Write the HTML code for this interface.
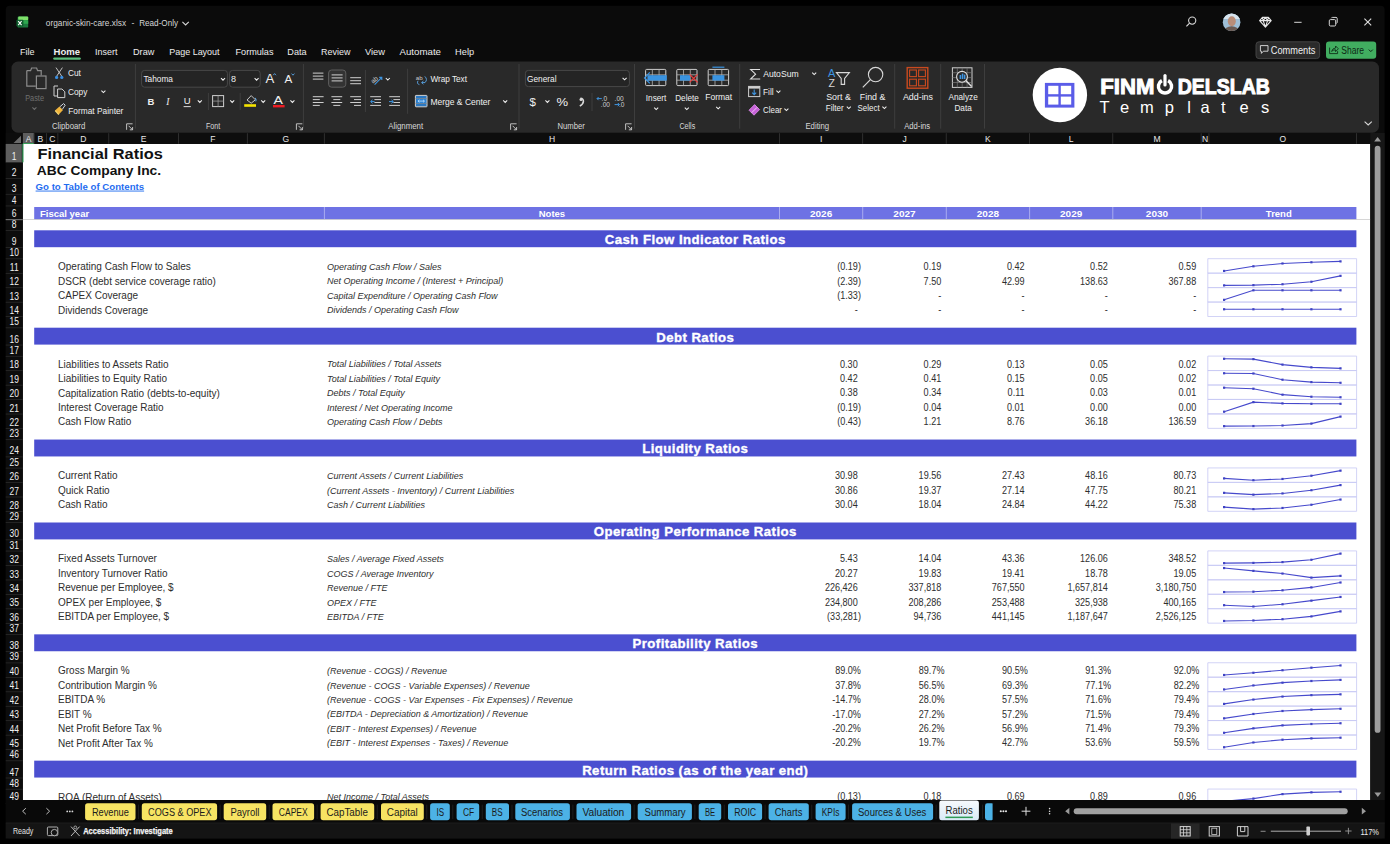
<!DOCTYPE html><html><head><meta charset="utf-8"><style>
html,body{margin:0;padding:0;background:#000;width:1390px;height:844px;overflow:hidden}
svg{display:block;font-family:"Liberation Sans",sans-serif}
</style></head><body>
<svg width="1390" height="844" viewBox="0 0 1390 844">
<rect x="0.00" y="0.00" width="1390.00" height="844.00" fill="#000"/>
<rect x="5.8" y="5.8" width="1378.8" height="832.7" rx="4" fill="#0b0b0b"/>
<rect x="17.6" y="16.6" width="10.6" height="11" rx="1.2" fill="#1d7a3f"/>
<rect x="18.2" y="16.6" width="10" height="3.6" rx="1" fill="#7fe06a"/>
<rect x="21" y="20.4" width="7.2" height="3.4" fill="#2ea84f"/>
<rect x="16.4" y="19.8" width="7" height="6.6" rx="0.8" fill="#0f5e2e"/>
<path d="M18.2 21.2 L21.6 25.2 M21.6 21.2 L18.2 25.2" stroke="#fff" stroke-width="1.1"/>
<text x="45.80" y="25.80" font-size="8.6" fill="#d6d6d6" textLength="80.30" lengthAdjust="spacingAndGlyphs">organic-skin-care.xlsx</text>
<text x="131.40" y="25.80" font-size="8.6" fill="#d6d6d6">-</text>
<text x="139.20" y="25.80" font-size="8.6" fill="#d6d6d6" textLength="38.90" lengthAdjust="spacingAndGlyphs">Read-Only</text>
<path d="M182.4 21.8 L185.6 25 L188.8 21.8" fill="none" stroke="#d6d6d6" stroke-width="1.1"/>
<circle cx="1192.2" cy="20.6" r="3.6" fill="none" stroke="#d8d8d8" stroke-width="1.1"/>
<path d="M1189.6 23.2 L1186.4 26.4" stroke="#d8d8d8" stroke-width="1.2"/>
<defs><clipPath id="avc"><circle cx="1231.6" cy="22.2" r="8.8"/></clipPath></defs>
<g clip-path="url(#avc)"><rect x="1222" y="12" width="20" height="20" fill="#9fbfd6"/><rect x="1222" y="12" width="20" height="7" fill="#d6e4ee"/>
<ellipse cx="1231.8" cy="21.2" rx="4.0" ry="5.0" fill="#b98d78"/><path d="M1223.6 31.6 Q1224.6 26.6 1231.6 26.2 Q1238.6 26.6 1239.6 31.6 Z" fill="#6b5a52"/></g>
<path d="M1259.6 20.6 L1262.4 17.4 L1268.4 17.4 L1271.2 20.6 L1265.4 27.2 Z M1259.6 20.6 L1271.2 20.6 M1263.2 20.6 L1265.4 27.2 L1267.6 20.6 M1262.4 17.4 L1263.2 20.6 L1265.4 17.4 L1267.6 20.6 L1268.4 17.4" fill="none" stroke="#e6e6e6" stroke-width="1.1" stroke-linejoin="round"/>
<rect x="1294.20" y="21.80" width="7.40" height="1.00" fill="#d8d8d8"/>
<rect x="1329.3" y="19.6" width="6.4" height="6.4" rx="1.2" fill="none" stroke="#d8d8d8" stroke-width="1"/>
<path d="M1331.2 18.2 Q1331.6 17.4 1332.6 17.4 L1336 17.4 Q1337.2 17.4 1337.2 18.6 L1337.2 22.2 Q1337.2 23.2 1336.4 23.4" fill="none" stroke="#d8d8d8" stroke-width="1"/>
<path d="M1364.4 18.6 L1371.2 25.4 M1371.2 18.6 L1364.4 25.4" stroke="#e0e0e0" stroke-width="1.1"/>
<text x="20.00" y="54.80" font-size="9.8" fill="#ededed" textLength="14.50" lengthAdjust="spacingAndGlyphs">File</text>
<text x="53.50" y="54.80" font-size="9.8" fill="#ededed" font-weight="bold" textLength="26.60" lengthAdjust="spacingAndGlyphs">Home</text>
<text x="95.00" y="54.80" font-size="9.8" fill="#ededed" textLength="22.40" lengthAdjust="spacingAndGlyphs">Insert</text>
<text x="133.00" y="54.80" font-size="9.8" fill="#ededed" textLength="21.30" lengthAdjust="spacingAndGlyphs">Draw</text>
<text x="169.20" y="54.80" font-size="9.8" fill="#ededed" textLength="50.40" lengthAdjust="spacingAndGlyphs">Page Layout</text>
<text x="235.50" y="54.80" font-size="9.8" fill="#ededed" textLength="38.00" lengthAdjust="spacingAndGlyphs">Formulas</text>
<text x="287.30" y="54.80" font-size="9.8" fill="#ededed" textLength="19.30" lengthAdjust="spacingAndGlyphs">Data</text>
<text x="321.10" y="54.80" font-size="9.8" fill="#ededed" textLength="29.40" lengthAdjust="spacingAndGlyphs">Review</text>
<text x="365.00" y="54.80" font-size="9.8" fill="#ededed" textLength="20.00" lengthAdjust="spacingAndGlyphs">View</text>
<text x="399.50" y="54.80" font-size="9.8" fill="#ededed" textLength="41.50" lengthAdjust="spacingAndGlyphs">Automate</text>
<text x="455.10" y="54.80" font-size="9.8" fill="#ededed" textLength="19.00" lengthAdjust="spacingAndGlyphs">Help</text>
<rect x="53.2" y="57.4" width="27.6" height="2.4" rx="1.2" fill="#5bbd7b"/>
<rect x="1256.0" y="41.8" width="63.6" height="16.8" rx="3" fill="#2a2a2a" stroke="#474747" stroke-width="0.9"/>
<path d="M1260.4 45.6 L1268 45.6 L1268 51.2 L1263.4 51.2 L1261.4 53.4 L1261.4 51.2 L1260.4 51.2 Z" fill="none" stroke="#e0e0e0" stroke-width="0.9"/>
<text x="1270.80" y="54.40" font-size="10" fill="#f0f0f0" textLength="44.60" lengthAdjust="spacingAndGlyphs">Comments</text>
<rect x="1326.0" y="41.6" width="50.2" height="17.2" rx="3" fill="#41ad60"/>
<path d="M1329.6 47.6 L1329.6 53.6 L1337.6 53.6 L1337.6 51.2 M1331.6 51.4 Q1332.4 48.2 1335.6 48 L1335.6 46 L1338.4 48.8 L1335.6 51.6 L1335.6 49.8 Q1333.2 49.8 1331.6 51.4 Z" fill="none" stroke="#10301a" stroke-width="0.9" stroke-linejoin="round"/>
<text x="1341.30" y="54.40" font-size="10" fill="#0e2a16" textLength="22.70" lengthAdjust="spacingAndGlyphs">Share</text>
<path d="M1368.8 49.6 L1370.8 51.6 L1372.8 49.6" fill="none" stroke="#0e2a16" stroke-width="1"/>
<rect x="11.5" y="61.5" width="1367.5" height="71.2" rx="6.5" fill="#292929"/>
<path d="M26.8 70.6 L30.6 70.6 L31.6 68 L36.6 68 L37.6 70.6 L41.2 70.6 L41.2 75.4 M26.8 70.6 L26.8 86.2 L35.8 86.2" fill="none" stroke="#8c8c8c" stroke-width="1.2"/>
<rect x="36.4" y="76.0" width="9.6" height="12.6" fill="none" stroke="#8c8c8c" stroke-width="1.2"/>
<text x="25.20" y="100.50" font-size="9" fill="#6f6f6f" textLength="18.80" lengthAdjust="spacingAndGlyphs">Paste</text>
<path d="M32.40 107.40 L34.40 109.40 L36.40 107.40" fill="none" stroke="#6f6f6f" stroke-width="1.05"/>
<path d="M56 67.6 L61.6 76 M62.4 67.6 L56.8 76" fill="none" stroke="#d0d0d0" stroke-width="0.9"/>
<circle cx="56.6" cy="77.4" r="1.6" fill="#3b8ee0"/><circle cx="61.8" cy="77.4" r="1.6" fill="#3b8ee0"/>
<text x="68.00" y="76.40" font-size="9" fill="#f0f0f0" textLength="12.90" lengthAdjust="spacingAndGlyphs">Cut</text>
<path d="M58 86 L54 86 L54 96 L57.6 96" fill="none" stroke="#cfcfcf" stroke-width="1"/>
<path d="M57.6 89 L62 89 L64.8 91.8 L64.8 97.6 L57.6 97.6 Z" fill="none" stroke="#cfcfcf" stroke-width="1"/>
<text x="68.00" y="94.80" font-size="9" fill="#f0f0f0" textLength="19.40" lengthAdjust="spacingAndGlyphs">Copy</text>
<path d="M101.40 90.60 L103.40 92.60 L105.40 90.60" fill="none" stroke="#f0f0f0" stroke-width="1.05"/>
<path d="M55 110.6 L59.4 106.4 L63 110 L58.8 114.6 Z" fill="#f0b43c"/>
<path d="M55.2 110.6 L58.8 114.6" stroke="#f7d873" stroke-width="1.2"/>
<path d="M59.8 106.8 L63.6 103.6 L65.2 105.2 L62.4 109.2" fill="none" stroke="#cfd6e0" stroke-width="1"/>
<text x="68.20" y="113.80" font-size="9" fill="#f0f0f0" textLength="55.20" lengthAdjust="spacingAndGlyphs">Format Painter</text>
<text x="52.00" y="128.80" font-size="8.4" fill="#d8d8d8" textLength="33.20" lengthAdjust="spacingAndGlyphs">Clipboard</text>
<path d="M126.60 129.80 L126.60 123.80 L132.60 123.80" fill="none" stroke="#cfcfcf" stroke-width="0.9"/>
<path d="M128.60 125.80 L132.60 129.80 M132.60 127.00 L132.60 129.80 L129.80 129.80" fill="none" stroke="#cfcfcf" stroke-width="0.9"/>
<rect x="134.90" y="64.00" width="1.00" height="64.60" fill="#3e3e3e"/>
<rect x="141.6" y="70.4" width="85.8" height="16.8" rx="3" fill="#242424" stroke="#4c4c4c" stroke-width="0.9"/>
<text x="143.40" y="82.40" font-size="9" fill="#f0f0f0" textLength="29.60" lengthAdjust="spacingAndGlyphs">Tahoma</text>
<path d="M221.00 78.20 L223.00 80.20 L225.00 78.20" fill="none" stroke="#f0f0f0" stroke-width="1.05"/>
<rect x="229.6" y="70.4" width="30.6" height="16.8" rx="3" fill="#242424" stroke="#4c4c4c" stroke-width="0.9"/>
<text x="231.00" y="82.40" font-size="9" fill="#f0f0f0">8</text>
<path d="M254.60 78.20 L256.60 80.20 L258.60 78.20" fill="none" stroke="#f0f0f0" stroke-width="1.05"/>
<text x="265.40" y="83.40" font-size="12" fill="#f0f0f0" textLength="8.80" lengthAdjust="spacingAndGlyphs">A</text>
<path d="M273.2 75.2 L274.6 73.6 L276 75.2" fill="none" stroke="#5aa6e8" stroke-width="0.9"/>
<text x="284.40" y="83.40" font-size="11" fill="#f0f0f0" textLength="7.80" lengthAdjust="spacingAndGlyphs">A</text>
<path d="M291.6 73.6 L293 75.2 L294.4 73.6" fill="none" stroke="#5aa6e8" stroke-width="0.9"/>
<text x="147.40" y="104.80" font-size="9.5" fill="#f0f0f0" font-weight="bold">B</text>
<text x="166.20" y="104.80" font-size="9.5" fill="#f0f0f0" font-style="italic" font-family="Liberation Serif">I</text>
<text x="183.80" y="104.20" font-size="9.5" fill="#f0f0f0">U</text>
<rect x="183.60" y="106.20" width="7.20" height="0.90" fill="#f0f0f0"/>
<path d="M197.80 100.40 L199.80 102.40 L201.80 100.40" fill="none" stroke="#f0f0f0" stroke-width="1.05"/>
<rect x="207.90" y="93.00" width="1.00" height="17.00" fill="#3e3e3e"/>
<rect x="212.6" y="95.6" width="11" height="11" fill="none" stroke="#cfcfcf" stroke-width="1"/>
<path d="M218.1 95.6 L218.1 106.6 M212.6 101.1 L223.6 101.1" stroke="#9a9a9a" stroke-width="0.8"/>
<path d="M230.20 100.40 L232.20 102.40 L234.20 100.40" fill="none" stroke="#f0f0f0" stroke-width="1.05"/>
<rect x="239.70" y="93.00" width="1.00" height="17.00" fill="#3e3e3e"/>
<path d="M247 100 L251.2 95.6 L255.4 99.8 L251.2 103.2 Z" fill="none" stroke="#d8d8d8" stroke-width="0.9"/>
<path d="M255.2 97.8 Q256.8 99.8 255.8 101.4" fill="none" stroke="#5aa6e8" stroke-width="1"/>
<rect x="244.20" y="104.20" width="11.80" height="2.60" fill="#f6e400"/>
<path d="M261.20 100.40 L263.20 102.40 L265.20 100.40" fill="none" stroke="#f0f0f0" stroke-width="1.05"/>
<text x="273.60" y="103.60" font-size="11" fill="#f0f0f0" textLength="9.40" lengthAdjust="spacingAndGlyphs">A</text>
<rect x="273.00" y="105.00" width="11.60" height="2.40" fill="#ec1c24"/>
<path d="M290.40 100.40 L292.40 102.40 L294.40 100.40" fill="none" stroke="#f0f0f0" stroke-width="1.05"/>
<text x="206.00" y="128.80" font-size="8.4" fill="#d8d8d8" textLength="14.20" lengthAdjust="spacingAndGlyphs">Font</text>
<path d="M296.40 129.80 L296.40 123.80 L302.40 123.80" fill="none" stroke="#cfcfcf" stroke-width="0.9"/>
<path d="M298.40 125.80 L302.40 129.80 M302.40 127.00 L302.40 129.80 L299.60 129.80" fill="none" stroke="#cfcfcf" stroke-width="0.9"/>
<rect x="302.90" y="64.00" width="1.00" height="64.60" fill="#3e3e3e"/>
<rect x="312.80" y="72.60" width="10.60" height="1.00" fill="#cfcfcf"/>
<rect x="312.80" y="75.60" width="10.60" height="1.00" fill="#cfcfcf"/>
<rect x="312.80" y="78.60" width="10.60" height="1.00" fill="#cfcfcf"/>
<rect x="328.6" y="70.0" width="17.2" height="17.2" rx="3" fill="#333" stroke="#5e5e5e" stroke-width="1"/>
<rect x="331.60" y="74.40" width="11.00" height="1.00" fill="#cfcfcf"/>
<rect x="331.60" y="77.40" width="11.00" height="1.00" fill="#cfcfcf"/>
<rect x="331.60" y="80.40" width="11.00" height="1.00" fill="#cfcfcf"/>
<rect x="350.20" y="77.20" width="10.80" height="1.00" fill="#cfcfcf"/>
<rect x="350.20" y="80.20" width="10.80" height="1.00" fill="#cfcfcf"/>
<rect x="350.20" y="83.20" width="10.80" height="1.00" fill="#cfcfcf"/>
<rect x="364.90" y="70.00" width="1.00" height="40.00" fill="#3e3e3e"/>
<text x="370.2" y="82" font-size="6.5" fill="#cfcfcf" transform="rotate(-40 374 79)">ab</text>
<path d="M374.6 84.6 L381.8 77.4 M379.2 77.4 L381.8 77.4 L381.8 80" fill="none" stroke="#3f95e0" stroke-width="1.1"/>
<path d="M385.80 78.00 L387.80 80.00 L389.80 78.00" fill="none" stroke="#f0f0f0" stroke-width="1.05"/>
<rect x="407.10" y="68.70" width="1.00" height="45.10" fill="#3e3e3e"/>
<text x="415.8" y="80" font-size="6.2" fill="#cfcfcf">ab</text>
<path d="M418 80.8 Q416.4 83.8 419.4 84.6 M424.8 76.4 Q428 79.4 425 82.6 L421.8 82.6 M423.4 81 L421.6 82.6 L423.4 84.2" fill="none" stroke="#5aa6e8" stroke-width="0.9"/>
<text x="430.40" y="81.60" font-size="9" fill="#f0f0f0" textLength="36.60" lengthAdjust="spacingAndGlyphs">Wrap Text</text>
<rect x="312.80" y="96.20" width="10.80" height="1.00" fill="#cfcfcf"/>
<rect x="312.80" y="99.10" width="7.00" height="1.00" fill="#cfcfcf"/>
<rect x="312.80" y="102.00" width="10.80" height="1.00" fill="#cfcfcf"/>
<rect x="312.80" y="104.90" width="7.00" height="1.00" fill="#cfcfcf"/>
<rect x="331.40" y="96.20" width="10.80" height="1.00" fill="#cfcfcf"/>
<rect x="333.30" y="99.10" width="7.00" height="1.00" fill="#cfcfcf"/>
<rect x="331.40" y="102.00" width="10.80" height="1.00" fill="#cfcfcf"/>
<rect x="333.30" y="104.90" width="7.00" height="1.00" fill="#cfcfcf"/>
<rect x="350.20" y="96.20" width="10.80" height="1.00" fill="#cfcfcf"/>
<rect x="354.00" y="99.10" width="7.00" height="1.00" fill="#cfcfcf"/>
<rect x="350.20" y="102.00" width="10.80" height="1.00" fill="#cfcfcf"/>
<rect x="354.00" y="104.90" width="7.00" height="1.00" fill="#cfcfcf"/>
<rect x="364.90" y="92.00" width="1.00" height="20.00" fill="#3e3e3e"/>
<rect x="370.20" y="96.20" width="10.80" height="1.00" fill="#cfcfcf"/>
<rect x="374.40" y="99.10" width="6.60" height="1.00" fill="#cfcfcf"/>
<rect x="374.40" y="102.00" width="6.60" height="1.00" fill="#cfcfcf"/>
<rect x="370.20" y="104.90" width="10.80" height="1.00" fill="#cfcfcf"/>
<path d="M374.6 101.6 L371 101.6 M372.6 99.8 L370.6 101.6 L372.6 103.4" fill="none" stroke="#3f95e0" stroke-width="1"/>
<rect x="389.20" y="96.20" width="10.80" height="1.00" fill="#cfcfcf"/>
<rect x="393.40" y="99.10" width="6.60" height="1.00" fill="#cfcfcf"/>
<rect x="393.40" y="102.00" width="6.60" height="1.00" fill="#cfcfcf"/>
<rect x="389.20" y="104.90" width="10.80" height="1.00" fill="#cfcfcf"/>
<path d="M389 101.6 L393 101.6 M391.4 99.8 L393.4 101.6 L391.4 103.4" fill="none" stroke="#3f95e0" stroke-width="1"/>
<rect x="415.4" y="95.4" width="11.6" height="11.4" rx="0.6" fill="#2a78c2" stroke="#d0d0d0" stroke-width="1"/>
<path d="M415.4 98.6 L427 98.6 M415.4 103.4 L427 103.4" stroke="#8a8a8a" stroke-width="0.7"/>
<rect x="416.60" y="99.20" width="9.20" height="3.80" fill="#2f86d6"/>
<path d="M418 101.1 L424.4 101.1 M419.4 99.8 L418 101.1 L419.4 102.4 M423 99.8 L424.4 101.1 L423 102.4" fill="none" stroke="#bfe0ff" stroke-width="0.8"/>
<text x="430.40" y="104.60" font-size="9" fill="#f0f0f0" textLength="60.00" lengthAdjust="spacingAndGlyphs">Merge &amp; Center</text>
<path d="M503.20 100.40 L505.20 102.40 L507.20 100.40" fill="none" stroke="#f0f0f0" stroke-width="1.05"/>
<text x="388.20" y="128.80" font-size="8.4" fill="#d8d8d8" textLength="35.00" lengthAdjust="spacingAndGlyphs">Alignment</text>
<path d="M510.60 129.80 L510.60 123.80 L516.60 123.80" fill="none" stroke="#cfcfcf" stroke-width="0.9"/>
<path d="M512.60 125.80 L516.60 129.80 M516.60 127.00 L516.60 129.80 L513.80 129.80" fill="none" stroke="#cfcfcf" stroke-width="0.9"/>
<rect x="518.50" y="64.00" width="1.00" height="64.60" fill="#3e3e3e"/>
<rect x="525.4" y="70.4" width="104" height="16.2" rx="3" fill="#242424" stroke="#4c4c4c" stroke-width="0.9"/>
<text x="527.00" y="82.40" font-size="9" fill="#f0f0f0" textLength="29.60" lengthAdjust="spacingAndGlyphs">General</text>
<path d="M622.60 77.80 L624.60 79.80 L626.60 77.80" fill="none" stroke="#f0f0f0" stroke-width="1.05"/>
<text x="529.60" y="106.20" font-size="11.5" fill="#f0f0f0">$</text>
<path d="M545.40 100.40 L547.40 102.40 L549.40 100.40" fill="none" stroke="#f0f0f0" stroke-width="1.05"/>
<text x="556.60" y="105.60" font-size="11" fill="#f0f0f0" textLength="11.60" lengthAdjust="spacingAndGlyphs">%</text>
<path d="M580.4 98.4 Q583.6 98.6 583.4 101.6 Q583 104.4 579.8 106" fill="none" stroke="#d8d8d8" stroke-width="1.6"/><circle cx="581" cy="99.6" r="1.5" fill="#d8d8d8"/>
<rect x="591.50" y="93.00" width="1.00" height="18.00" fill="#3e3e3e"/>
<text x="601.60" y="101.20" font-size="6.6" fill="#cfcfcf">.0</text>
<text x="600.80" y="107.40" font-size="6.6" fill="#cfcfcf">.00</text>
<path d="M601.8 98.6 L597 98.6 M598.6 97 L597 98.6 L598.6 100.2" fill="none" stroke="#3f95e0" stroke-width="1"/>
<text x="614.60" y="101.20" font-size="6.6" fill="#cfcfcf">.00</text>
<text x="619.00" y="107.40" font-size="6.6" fill="#cfcfcf">.0</text>
<path d="M614.6 104.6 L619.4 104.6 M617.8 103 L619.4 104.6 L617.8 106.2" fill="none" stroke="#3f95e0" stroke-width="1"/>
<text x="557.40" y="128.80" font-size="8.4" fill="#d8d8d8" textLength="27.40" lengthAdjust="spacingAndGlyphs">Number</text>
<path d="M625.60 129.80 L625.60 123.80 L631.60 123.80" fill="none" stroke="#cfcfcf" stroke-width="0.9"/>
<path d="M627.60 125.80 L631.60 129.80 M631.60 127.00 L631.60 129.80 L628.80 129.80" fill="none" stroke="#cfcfcf" stroke-width="0.9"/>
<rect x="634.00" y="64.00" width="1.00" height="64.60" fill="#3e3e3e"/>
<rect x="645.60" y="69.40" width="20.20" height="16.20" rx="1" fill="none" stroke="#cfcfcf" stroke-width="1"/>
<line x1="652.33" y1="69.40" x2="652.33" y2="85.60" stroke="#b4b4b4" stroke-width="0.8"/>
<line x1="645.60" y1="74.80" x2="665.80" y2="74.80" stroke="#b4b4b4" stroke-width="0.8"/>
<line x1="659.07" y1="69.40" x2="659.07" y2="85.60" stroke="#b4b4b4" stroke-width="0.8"/>
<line x1="645.60" y1="80.20" x2="665.80" y2="80.20" stroke="#b4b4b4" stroke-width="0.8"/>
<path d="M647.4 75.2 L666.8 75.2 L666.8 80.6 L647.4 80.6 Z" fill="#3a93e0"/>
<path d="M649.8 72.4 L644.6 77.9 L649.8 83.4" fill="none" stroke="#3a93e0" stroke-width="1.3"/>
<text x="645.80" y="100.60" font-size="9" fill="#f0f0f0" textLength="20.60" lengthAdjust="spacingAndGlyphs">Insert</text>
<path d="M654.20 107.60 L656.20 109.60 L658.20 107.60" fill="none" stroke="#f0f0f0" stroke-width="1.05"/>
<rect x="676.80" y="69.40" width="20.20" height="16.20" rx="1" fill="none" stroke="#cfcfcf" stroke-width="1"/>
<line x1="683.53" y1="69.40" x2="683.53" y2="85.60" stroke="#b4b4b4" stroke-width="0.8"/>
<line x1="676.80" y1="74.80" x2="697.00" y2="74.80" stroke="#b4b4b4" stroke-width="0.8"/>
<line x1="690.27" y1="69.40" x2="690.27" y2="85.60" stroke="#b4b4b4" stroke-width="0.8"/>
<line x1="676.80" y1="80.20" x2="697.00" y2="80.20" stroke="#b4b4b4" stroke-width="0.8"/>
<rect x="680" y="75.2" width="10" height="5.4" fill="#3a93e0"/>
<path d="M689.6 74.4 L697.6 82.4 M697.6 74.4 L689.6 82.4" stroke="#e83a3a" stroke-width="1.3"/>
<text x="675.20" y="100.60" font-size="9" fill="#f0f0f0" textLength="23.60" lengthAdjust="spacingAndGlyphs">Delete</text>
<path d="M684.80 107.60 L686.80 109.60 L688.80 107.60" fill="none" stroke="#f0f0f0" stroke-width="1.05"/>
<rect x="708.20" y="69.40" width="20.40" height="16.20" rx="1" fill="none" stroke="#cfcfcf" stroke-width="1"/>
<line x1="715.00" y1="69.40" x2="715.00" y2="85.60" stroke="#b4b4b4" stroke-width="0.8"/>
<line x1="708.20" y1="74.80" x2="728.60" y2="74.80" stroke="#b4b4b4" stroke-width="0.8"/>
<line x1="721.80" y1="69.40" x2="721.80" y2="85.60" stroke="#b4b4b4" stroke-width="0.8"/>
<line x1="708.20" y1="80.20" x2="728.60" y2="80.20" stroke="#b4b4b4" stroke-width="0.8"/>
<rect x="712.40" y="75.20" width="12.00" height="5.40" fill="#3a93e0"/>
<rect x="712.40" y="66.60" width="12.00" height="1.20" fill="#3a93e0"/>
<text x="705.20" y="100.00" font-size="9" fill="#f0f0f0" textLength="27.00" lengthAdjust="spacingAndGlyphs">Format</text>
<path d="M716.20 106.80 L718.20 108.80 L720.20 106.80" fill="none" stroke="#f0f0f0" stroke-width="1.05"/>
<text x="679.40" y="128.80" font-size="8.4" fill="#d8d8d8" textLength="15.80" lengthAdjust="spacingAndGlyphs">Cells</text>
<rect x="739.20" y="64.00" width="1.00" height="64.60" fill="#3e3e3e"/>
<path d="M760 69.4 L750.6 69.4 L755.6 74.2 L750.6 79 L760.2 79" fill="none" stroke="#e0e0e0" stroke-width="1.05" stroke-linejoin="miter"/>
<text x="763.20" y="76.60" font-size="9" fill="#f0f0f0" textLength="35.40" lengthAdjust="spacingAndGlyphs">AutoSum</text>
<path d="M812.20 72.60 L814.20 74.60 L816.20 72.60" fill="none" stroke="#f0f0f0" stroke-width="1.05"/>
<rect x="748.6" y="86.4" width="11.2" height="10.2" fill="none" stroke="#cfcfcf" stroke-width="1"/>
<rect x="748.60" y="86.40" width="11.20" height="2.20" fill="#cfcfcf"/>
<path d="M754.2 89.6 L754.2 94.4 M752.2 92.6 L754.2 94.6 L756.2 92.6" fill="none" stroke="#3f95e0" stroke-width="1.1"/>
<text x="763.00" y="94.80" font-size="9" fill="#f0f0f0" textLength="10.60" lengthAdjust="spacingAndGlyphs">Fill</text>
<path d="M776.40 90.60 L778.40 92.60 L780.40 90.60" fill="none" stroke="#f0f0f0" stroke-width="1.05"/>
<path d="M749 110.2 L754.6 104.6 L759.6 109.6 L754 115.2 Z" fill="#c660d8" stroke="#e090ee" stroke-width="0.8"/>
<path d="M751.6 112.8 L757 107.4" stroke="#f2c6f8" stroke-width="1"/>
<text x="763.00" y="112.80" font-size="9" fill="#f0f0f0" textLength="19.00" lengthAdjust="spacingAndGlyphs">Clear</text>
<path d="M784.40 108.60 L786.40 110.60 L788.40 108.60" fill="none" stroke="#f0f0f0" stroke-width="1.05"/>
<text x="828.00" y="77.00" font-size="11" fill="#3f95e0">A</text>
<text x="828.40" y="86.80" font-size="10.5" fill="#d8d8d8">Z</text>
<path d="M836.4 72.6 L849.4 72.6 L844.6 78.4 L844.6 84.4 L841.2 84.4 L841.2 78.4 Z" fill="none" stroke="#d8d8d8" stroke-width="1.1"/>
<text x="826.20" y="99.80" font-size="9" fill="#f0f0f0" textLength="24.60" lengthAdjust="spacingAndGlyphs">Sort &amp;</text>
<text x="825.80" y="110.90" font-size="9" fill="#f0f0f0" textLength="17.80" lengthAdjust="spacingAndGlyphs">Filter</text>
<path d="M846.80 106.60 L848.80 108.60 L850.80 106.60" fill="none" stroke="#f0f0f0" stroke-width="1.05"/>
<circle cx="875.6" cy="74.6" r="7.2" fill="none" stroke="#d8d8d8" stroke-width="1.1"/>
<path d="M870.4 79.6 L862.8 87.4" stroke="#d8d8d8" stroke-width="1.2"/>
<text x="859.80" y="99.80" font-size="9" fill="#f0f0f0" textLength="25.60" lengthAdjust="spacingAndGlyphs">Find &amp;</text>
<text x="857.60" y="110.90" font-size="9" fill="#f0f0f0" textLength="22.00" lengthAdjust="spacingAndGlyphs">Select</text>
<path d="M882.40 106.60 L884.40 108.60 L886.40 106.60" fill="none" stroke="#f0f0f0" stroke-width="1.05"/>
<text x="805.40" y="128.80" font-size="8.4" fill="#d8d8d8" textLength="23.80" lengthAdjust="spacingAndGlyphs">Editing</text>
<rect x="894.20" y="64.00" width="1.00" height="64.60" fill="#3e3e3e"/>
<rect x="907.2" y="67.6" width="20.6" height="20.6" fill="none" stroke="#c94a1f" stroke-width="1.4"/>
<rect x="909.6" y="70.0" width="6.8" height="6.6" fill="none" stroke="#c94a1f" stroke-width="1.1"/>
<rect x="918.6" y="70.0" width="6.8" height="6.6" fill="none" stroke="#c94a1f" stroke-width="1.1"/>
<rect x="909.6" y="79.2" width="6.8" height="6.6" fill="none" stroke="#c94a1f" stroke-width="1.1"/>
<rect x="918.6" y="79.2" width="6.8" height="6.6" fill="none" stroke="#c94a1f" stroke-width="1.1"/>
<text x="902.90" y="99.80" font-size="9" fill="#f0f0f0" textLength="30.10" lengthAdjust="spacingAndGlyphs">Add-ins</text>
<text x="904.20" y="128.80" font-size="8.4" fill="#d8d8d8" textLength="26.00" lengthAdjust="spacingAndGlyphs">Add-ins</text>
<rect x="940.20" y="64.00" width="1.00" height="64.60" fill="#3e3e3e"/>
<rect x="952.4" y="67.8" width="19.6" height="19.6" fill="none" stroke="#cfcfcf" stroke-width="1"/>
<line x1="952.40" y1="72.70" x2="972.00" y2="72.70" stroke="#7a7a7a" stroke-width="0.7"/>
<line x1="957.30" y1="67.80" x2="957.30" y2="87.40" stroke="#7a7a7a" stroke-width="0.7"/>
<line x1="952.40" y1="77.60" x2="972.00" y2="77.60" stroke="#7a7a7a" stroke-width="0.7"/>
<line x1="962.20" y1="67.80" x2="962.20" y2="87.40" stroke="#7a7a7a" stroke-width="0.7"/>
<line x1="952.40" y1="82.50" x2="972.00" y2="82.50" stroke="#7a7a7a" stroke-width="0.7"/>
<line x1="967.10" y1="67.80" x2="967.10" y2="87.40" stroke="#7a7a7a" stroke-width="0.7"/>
<circle cx="962" cy="76.8" r="5.4" fill="#292929" stroke="#e0e0e0" stroke-width="1.1"/>
<rect x="959.6" y="75" width="1.6" height="4" fill="#3f95e0"/><rect x="961.8" y="73.6" width="1.6" height="5.4" fill="#3f95e0"/><rect x="964" y="74.6" width="1.4" height="4.4" fill="#3f95e0"/>
<path d="M965.8 80.6 L971.6 86.6" stroke="#e0e0e0" stroke-width="1.4"/>
<text x="948.50" y="99.80" font-size="9" fill="#f0f0f0" textLength="29.20" lengthAdjust="spacingAndGlyphs">Analyze</text>
<text x="954.40" y="110.90" font-size="9" fill="#f0f0f0" textLength="17.40" lengthAdjust="spacingAndGlyphs">Data</text>
<rect x="984.00" y="64.00" width="1.00" height="64.60" fill="#3e3e3e"/>
<circle cx="1059.9" cy="95.0" r="27.2" fill="#ffffff"/>
<rect x="1044.90" y="82.90" width="29.50" height="24.70" fill="#5a5ce8"/>
<rect x="1048.20" y="85.80" width="10.20" height="8.40" fill="#ffffff"/>
<rect x="1060.80" y="85.80" width="10.40" height="8.40" fill="#ffffff"/>
<rect x="1048.20" y="96.60" width="10.20" height="8.00" fill="#ffffff"/>
<rect x="1060.80" y="96.60" width="10.40" height="8.00" fill="#ffffff"/>
<text x="1100.20" y="94.40" font-size="22.5" fill="#ffffff" font-weight="bold" textLength="54.20" lengthAdjust="spacingAndGlyphs" stroke="#fff" stroke-width="1.0">FINM</text>
<path d="M1161.9 80.6 A6.6 6.6 0 1 0 1168.1 80.6" fill="none" stroke="#fff" stroke-width="3.5"/>
<rect x="1163.4" y="74.0" width="3.2" height="12.6" rx="1.6" fill="#ffffff"/>
<text x="1177.80" y="94.40" font-size="22.5" fill="#ffffff" font-weight="bold" textLength="92.00" lengthAdjust="spacingAndGlyphs" stroke="#fff" stroke-width="1.0">DELSLAB</text>
<text x="1099.60" y="113.40" font-size="16.5" fill="#ffffff">T</text>
<text x="1120.00" y="113.40" font-size="16.5" fill="#ffffff">e</text>
<text x="1140.00" y="113.40" font-size="16.5" fill="#ffffff">m</text>
<text x="1164.70" y="113.40" font-size="16.5" fill="#ffffff">p</text>
<text x="1187.20" y="113.40" font-size="16.5" fill="#ffffff">l</text>
<text x="1200.60" y="113.40" font-size="16.5" fill="#ffffff">a</text>
<text x="1221.00" y="113.40" font-size="16.5" fill="#ffffff">t</text>
<text x="1239.50" y="113.40" font-size="16.5" fill="#ffffff">e</text>
<text x="1260.90" y="113.40" font-size="16.5" fill="#ffffff">s</text>
<path d="M1364.6 121.6 L1368.2 125 L1371.8 121.6" fill="none" stroke="#d8d8d8" stroke-width="1.1"/>
<rect x="22.80" y="143.90" width="1347.50" height="656.10" fill="#ffffff"/>
<text x="37.40" y="159.30" font-size="15.2" fill="#111" font-weight="bold" textLength="125.40" lengthAdjust="spacingAndGlyphs">Financial Ratios</text>
<text x="36.80" y="174.80" font-size="12" fill="#111" font-weight="bold" textLength="124.30" lengthAdjust="spacingAndGlyphs">ABC Company Inc.</text>
<text x="35.60" y="189.70" font-size="9" fill="#1f6cf0" font-weight="bold" textLength="108.50" lengthAdjust="spacingAndGlyphs">Go to Table of Contents</text>
<rect x="35.60" y="190.60" width="108.50" height="0.90" fill="#1f6cf0"/>
<rect x="34.20" y="207.00" width="1322.20" height="12.40" fill="#6e72e4"/>
<rect x="323.90" y="207.00" width="1.00" height="12.40" fill="#a9abf0"/>
<rect x="779.00" y="207.00" width="1.00" height="12.40" fill="#a9abf0"/>
<rect x="862.20" y="207.00" width="1.00" height="12.40" fill="#a9abf0"/>
<rect x="945.80" y="207.00" width="1.00" height="12.40" fill="#a9abf0"/>
<rect x="1029.10" y="207.00" width="1.00" height="12.40" fill="#a9abf0"/>
<rect x="1112.30" y="207.00" width="1.00" height="12.40" fill="#a9abf0"/>
<rect x="1200.70" y="207.00" width="1.00" height="12.40" fill="#a9abf0"/>
<text x="40.00" y="216.50" font-size="9.5" fill="#fff" font-weight="bold">Fiscal year</text>
<text x="551.95" y="216.50" font-size="9.5" fill="#fff" text-anchor="middle" font-weight="bold">Notes</text>
<text x="821.10" y="216.60" font-size="9.8" fill="#fff" text-anchor="middle" font-weight="bold" textLength="22.30" lengthAdjust="spacingAndGlyphs">2026</text>
<text x="904.50" y="216.60" font-size="9.8" fill="#fff" text-anchor="middle" font-weight="bold" textLength="22.30" lengthAdjust="spacingAndGlyphs">2027</text>
<text x="987.95" y="216.60" font-size="9.8" fill="#fff" text-anchor="middle" font-weight="bold" textLength="22.30" lengthAdjust="spacingAndGlyphs">2028</text>
<text x="1071.20" y="216.60" font-size="9.8" fill="#fff" text-anchor="middle" font-weight="bold" textLength="22.30" lengthAdjust="spacingAndGlyphs">2029</text>
<text x="1157.00" y="216.60" font-size="9.8" fill="#fff" text-anchor="middle" font-weight="bold" textLength="22.30" lengthAdjust="spacingAndGlyphs">2030</text>
<text x="1278.80" y="216.50" font-size="9.5" fill="#fff" text-anchor="middle" font-weight="bold">Trend</text>
<rect x="34.20" y="230.30" width="1322.20" height="16.90" fill="#4b4fd0"/>
<text x="695.30" y="244.20" font-size="13.2" fill="#fff" text-anchor="middle" font-weight="bold" letter-spacing="0.45" stroke="#fff" stroke-width="0.35">Cash Flow Indicator Ratios</text>
<rect x="34.20" y="327.70" width="1322.20" height="16.90" fill="#4b4fd0"/>
<text x="695.30" y="341.60" font-size="13.2" fill="#fff" text-anchor="middle" font-weight="bold" letter-spacing="0.45" stroke="#fff" stroke-width="0.35">Debt Ratios</text>
<rect x="34.20" y="439.55" width="1322.20" height="16.90" fill="#4b4fd0"/>
<text x="695.30" y="453.45" font-size="13.2" fill="#fff" text-anchor="middle" font-weight="bold" letter-spacing="0.45" stroke="#fff" stroke-width="0.35">Liquidity Ratios</text>
<rect x="34.20" y="522.50" width="1322.20" height="16.90" fill="#4b4fd0"/>
<text x="695.30" y="536.40" font-size="13.2" fill="#fff" text-anchor="middle" font-weight="bold" letter-spacing="0.45" stroke="#fff" stroke-width="0.35">Operating Performance Ratios</text>
<rect x="34.20" y="634.35" width="1322.20" height="16.90" fill="#4b4fd0"/>
<text x="695.30" y="648.25" font-size="13.2" fill="#fff" text-anchor="middle" font-weight="bold" letter-spacing="0.45" stroke="#fff" stroke-width="0.35">Profitability Ratios</text>
<rect x="34.20" y="760.65" width="1322.20" height="16.90" fill="#4b4fd0"/>
<text x="695.30" y="774.55" font-size="13.2" fill="#fff" text-anchor="middle" font-weight="bold" letter-spacing="0.45" stroke="#fff" stroke-width="0.35">Return Ratios (as of the year end)</text>
<text x="58.00" y="270.20" font-size="10" fill="#2e2e2e">Operating Cash Flow to Sales</text>
<text x="327.00" y="270.00" font-size="9" fill="#2e2e2e" font-style="italic">Operating Cash Flow / Sales</text>
<text transform="translate(860.90 270.10) scale(0.9 1)" font-size="10.1" fill="#2e2e2e" text-anchor="end">(0.19)</text>
<text transform="translate(941.30 270.10) scale(0.9 1)" font-size="10.1" fill="#2e2e2e" text-anchor="end">0.19</text>
<text transform="translate(1024.60 270.10) scale(0.9 1)" font-size="10.1" fill="#2e2e2e" text-anchor="end">0.42</text>
<text transform="translate(1107.80 270.10) scale(0.9 1)" font-size="10.1" fill="#2e2e2e" text-anchor="end">0.52</text>
<text transform="translate(1196.20 270.10) scale(0.9 1)" font-size="10.1" fill="#2e2e2e" text-anchor="end">0.59</text>
<path d="M1207.80 258.70 L1356.60 258.70 M1207.80 273.15 L1356.60 273.15 M1207.80 258.70 L1207.80 273.15 M1356.60 258.70 L1356.60 273.15" fill="none" stroke="#c6c8f4" stroke-width="0.8"/>
<polyline points="1224.10,270.95 1253.40,266.30 1282.50,263.48 1311.40,262.26 1340.50,261.40" fill="none" stroke="#4649cc" stroke-width="1.1"/>
<rect x="1223.00" y="269.85" width="2.2" height="2.2" fill="#3f43c4"/>
<rect x="1252.30" y="265.20" width="2.2" height="2.2" fill="#3f43c4"/>
<rect x="1281.40" y="262.38" width="2.2" height="2.2" fill="#3f43c4"/>
<rect x="1310.30" y="261.16" width="2.2" height="2.2" fill="#3f43c4"/>
<rect x="1339.40" y="260.30" width="2.2" height="2.2" fill="#3f43c4"/>
<text x="58.00" y="284.65" font-size="10" fill="#2e2e2e">DSCR (debt service coverage ratio)</text>
<text x="327.00" y="284.45" font-size="9" fill="#2e2e2e" font-style="italic">Net Operating Income / (Interest + Principal)</text>
<text transform="translate(860.90 284.55) scale(0.9 1)" font-size="10.1" fill="#2e2e2e" text-anchor="end">(2.39)</text>
<text transform="translate(941.30 284.55) scale(0.9 1)" font-size="10.1" fill="#2e2e2e" text-anchor="end">7.50</text>
<text transform="translate(1024.60 284.55) scale(0.9 1)" font-size="10.1" fill="#2e2e2e" text-anchor="end">42.99</text>
<text transform="translate(1107.80 284.55) scale(0.9 1)" font-size="10.1" fill="#2e2e2e" text-anchor="end">138.63</text>
<text transform="translate(1196.20 284.55) scale(0.9 1)" font-size="10.1" fill="#2e2e2e" text-anchor="end">367.88</text>
<path d="M1207.80 273.15 L1356.60 273.15 M1207.80 287.60 L1356.60 287.60 M1207.80 273.15 L1207.80 287.60 M1356.60 273.15 L1356.60 287.60" fill="none" stroke="#c6c8f4" stroke-width="0.8"/>
<polyline points="1224.10,285.40 1253.40,285.14 1282.50,284.23 1311.40,281.76 1340.50,275.85" fill="none" stroke="#4649cc" stroke-width="1.1"/>
<rect x="1223.00" y="284.30" width="2.2" height="2.2" fill="#3f43c4"/>
<rect x="1252.30" y="284.04" width="2.2" height="2.2" fill="#3f43c4"/>
<rect x="1281.40" y="283.13" width="2.2" height="2.2" fill="#3f43c4"/>
<rect x="1310.30" y="280.66" width="2.2" height="2.2" fill="#3f43c4"/>
<rect x="1339.40" y="274.75" width="2.2" height="2.2" fill="#3f43c4"/>
<text x="58.00" y="299.10" font-size="10" fill="#2e2e2e">CAPEX Coverage</text>
<text x="327.00" y="298.90" font-size="9" fill="#2e2e2e" font-style="italic">Capital Expenditure / Operating Cash Flow</text>
<text transform="translate(860.90 299.00) scale(0.9 1)" font-size="10.1" fill="#2e2e2e" text-anchor="end">(1.33)</text>
<text transform="translate(941.30 299.00) scale(0.9 1)" font-size="10.1" fill="#2e2e2e" text-anchor="end">-</text>
<text transform="translate(1024.60 299.00) scale(0.9 1)" font-size="10.1" fill="#2e2e2e" text-anchor="end">-</text>
<text transform="translate(1107.80 299.00) scale(0.9 1)" font-size="10.1" fill="#2e2e2e" text-anchor="end">-</text>
<text transform="translate(1196.20 299.00) scale(0.9 1)" font-size="10.1" fill="#2e2e2e" text-anchor="end">-</text>
<path d="M1207.80 287.60 L1356.60 287.60 M1207.80 302.05 L1356.60 302.05 M1207.80 287.60 L1207.80 302.05 M1356.60 287.60 L1356.60 302.05" fill="none" stroke="#c6c8f4" stroke-width="0.8"/>
<polyline points="1224.10,299.85 1253.40,290.30 1282.50,290.30 1311.40,290.30 1340.50,290.30" fill="none" stroke="#4649cc" stroke-width="1.1"/>
<rect x="1223.00" y="298.75" width="2.2" height="2.2" fill="#3f43c4"/>
<rect x="1252.30" y="289.20" width="2.2" height="2.2" fill="#3f43c4"/>
<rect x="1281.40" y="289.20" width="2.2" height="2.2" fill="#3f43c4"/>
<rect x="1310.30" y="289.20" width="2.2" height="2.2" fill="#3f43c4"/>
<rect x="1339.40" y="289.20" width="2.2" height="2.2" fill="#3f43c4"/>
<text x="58.00" y="313.55" font-size="10" fill="#2e2e2e">Dividends Coverage</text>
<text x="327.00" y="313.35" font-size="9" fill="#2e2e2e" font-style="italic">Dividends / Operating Cash Flow</text>
<text transform="translate(857.70 313.45) scale(0.9 1)" font-size="10.1" fill="#2e2e2e" text-anchor="end">-</text>
<text transform="translate(941.30 313.45) scale(0.9 1)" font-size="10.1" fill="#2e2e2e" text-anchor="end">-</text>
<text transform="translate(1024.60 313.45) scale(0.9 1)" font-size="10.1" fill="#2e2e2e" text-anchor="end">-</text>
<text transform="translate(1107.80 313.45) scale(0.9 1)" font-size="10.1" fill="#2e2e2e" text-anchor="end">-</text>
<text transform="translate(1196.20 313.45) scale(0.9 1)" font-size="10.1" fill="#2e2e2e" text-anchor="end">-</text>
<path d="M1207.80 302.05 L1356.60 302.05 M1207.80 316.50 L1356.60 316.50 M1207.80 302.05 L1207.80 316.50 M1356.60 302.05 L1356.60 316.50" fill="none" stroke="#c6c8f4" stroke-width="0.8"/>
<polyline points="1224.10,309.27 1253.40,309.27 1282.50,309.27 1311.40,309.27 1340.50,309.27" fill="none" stroke="#4649cc" stroke-width="1.1"/>
<rect x="1223.00" y="308.17" width="2.2" height="2.2" fill="#3f43c4"/>
<rect x="1252.30" y="308.17" width="2.2" height="2.2" fill="#3f43c4"/>
<rect x="1281.40" y="308.17" width="2.2" height="2.2" fill="#3f43c4"/>
<rect x="1310.30" y="308.17" width="2.2" height="2.2" fill="#3f43c4"/>
<rect x="1339.40" y="308.17" width="2.2" height="2.2" fill="#3f43c4"/>
<text x="58.00" y="367.60" font-size="10" fill="#2e2e2e">Liabilities to Assets Ratio</text>
<text x="327.00" y="367.40" font-size="9" fill="#2e2e2e" font-style="italic">Total Liabilities / Total Assets</text>
<text transform="translate(857.70 367.50) scale(0.9 1)" font-size="10.1" fill="#2e2e2e" text-anchor="end">0.30</text>
<text transform="translate(941.30 367.50) scale(0.9 1)" font-size="10.1" fill="#2e2e2e" text-anchor="end">0.29</text>
<text transform="translate(1024.60 367.50) scale(0.9 1)" font-size="10.1" fill="#2e2e2e" text-anchor="end">0.13</text>
<text transform="translate(1107.80 367.50) scale(0.9 1)" font-size="10.1" fill="#2e2e2e" text-anchor="end">0.05</text>
<text transform="translate(1196.20 367.50) scale(0.9 1)" font-size="10.1" fill="#2e2e2e" text-anchor="end">0.02</text>
<path d="M1207.80 356.10 L1356.60 356.10 M1207.80 370.55 L1356.60 370.55 M1207.80 356.10 L1207.80 370.55 M1356.60 356.10 L1356.60 370.55" fill="none" stroke="#c6c8f4" stroke-width="0.8"/>
<polyline points="1224.10,358.80 1253.40,359.14 1282.50,364.60 1311.40,367.33 1340.50,368.35" fill="none" stroke="#4649cc" stroke-width="1.1"/>
<rect x="1223.00" y="357.70" width="2.2" height="2.2" fill="#3f43c4"/>
<rect x="1252.30" y="358.04" width="2.2" height="2.2" fill="#3f43c4"/>
<rect x="1281.40" y="363.50" width="2.2" height="2.2" fill="#3f43c4"/>
<rect x="1310.30" y="366.23" width="2.2" height="2.2" fill="#3f43c4"/>
<rect x="1339.40" y="367.25" width="2.2" height="2.2" fill="#3f43c4"/>
<text x="58.00" y="382.05" font-size="10" fill="#2e2e2e">Liabilities to Equity Ratio</text>
<text x="327.00" y="381.85" font-size="9" fill="#2e2e2e" font-style="italic">Total Liabilities / Total Equity</text>
<text transform="translate(857.70 381.95) scale(0.9 1)" font-size="10.1" fill="#2e2e2e" text-anchor="end">0.42</text>
<text transform="translate(941.30 381.95) scale(0.9 1)" font-size="10.1" fill="#2e2e2e" text-anchor="end">0.41</text>
<text transform="translate(1024.60 381.95) scale(0.9 1)" font-size="10.1" fill="#2e2e2e" text-anchor="end">0.15</text>
<text transform="translate(1107.80 381.95) scale(0.9 1)" font-size="10.1" fill="#2e2e2e" text-anchor="end">0.05</text>
<text transform="translate(1196.20 381.95) scale(0.9 1)" font-size="10.1" fill="#2e2e2e" text-anchor="end">0.02</text>
<path d="M1207.80 370.55 L1356.60 370.55 M1207.80 385.00 L1356.60 385.00 M1207.80 370.55 L1207.80 385.00 M1356.60 370.55 L1356.60 385.00" fill="none" stroke="#c6c8f4" stroke-width="0.8"/>
<polyline points="1224.10,373.25 1253.40,373.49 1282.50,379.70 1311.40,382.08 1340.50,382.80" fill="none" stroke="#4649cc" stroke-width="1.1"/>
<rect x="1223.00" y="372.15" width="2.2" height="2.2" fill="#3f43c4"/>
<rect x="1252.30" y="372.39" width="2.2" height="2.2" fill="#3f43c4"/>
<rect x="1281.40" y="378.60" width="2.2" height="2.2" fill="#3f43c4"/>
<rect x="1310.30" y="380.98" width="2.2" height="2.2" fill="#3f43c4"/>
<rect x="1339.40" y="381.70" width="2.2" height="2.2" fill="#3f43c4"/>
<text x="58.00" y="396.50" font-size="10" fill="#2e2e2e">Capitalization Ratio (debts-to-equity)</text>
<text x="327.00" y="396.30" font-size="9" fill="#2e2e2e" font-style="italic">Debts / Total Equity</text>
<text transform="translate(857.70 396.40) scale(0.9 1)" font-size="10.1" fill="#2e2e2e" text-anchor="end">0.38</text>
<text transform="translate(941.30 396.40) scale(0.9 1)" font-size="10.1" fill="#2e2e2e" text-anchor="end">0.34</text>
<text transform="translate(1024.60 396.40) scale(0.9 1)" font-size="10.1" fill="#2e2e2e" text-anchor="end">0.11</text>
<text transform="translate(1107.80 396.40) scale(0.9 1)" font-size="10.1" fill="#2e2e2e" text-anchor="end">0.03</text>
<text transform="translate(1196.20 396.40) scale(0.9 1)" font-size="10.1" fill="#2e2e2e" text-anchor="end">0.01</text>
<path d="M1207.80 385.00 L1356.60 385.00 M1207.80 399.45 L1356.60 399.45 M1207.80 385.00 L1207.80 399.45 M1356.60 385.00 L1356.60 399.45" fill="none" stroke="#c6c8f4" stroke-width="0.8"/>
<polyline points="1224.10,387.70 1253.40,388.73 1282.50,394.67 1311.40,396.73 1340.50,397.25" fill="none" stroke="#4649cc" stroke-width="1.1"/>
<rect x="1223.00" y="386.60" width="2.2" height="2.2" fill="#3f43c4"/>
<rect x="1252.30" y="387.63" width="2.2" height="2.2" fill="#3f43c4"/>
<rect x="1281.40" y="393.57" width="2.2" height="2.2" fill="#3f43c4"/>
<rect x="1310.30" y="395.63" width="2.2" height="2.2" fill="#3f43c4"/>
<rect x="1339.40" y="396.15" width="2.2" height="2.2" fill="#3f43c4"/>
<text x="58.00" y="410.95" font-size="10" fill="#2e2e2e">Interest Coverage Ratio</text>
<text x="327.00" y="410.75" font-size="9" fill="#2e2e2e" font-style="italic">Interest / Net Operating Income</text>
<text transform="translate(860.90 410.85) scale(0.9 1)" font-size="10.1" fill="#2e2e2e" text-anchor="end">(0.19)</text>
<text transform="translate(941.30 410.85) scale(0.9 1)" font-size="10.1" fill="#2e2e2e" text-anchor="end">0.04</text>
<text transform="translate(1024.60 410.85) scale(0.9 1)" font-size="10.1" fill="#2e2e2e" text-anchor="end">0.01</text>
<text transform="translate(1107.80 410.85) scale(0.9 1)" font-size="10.1" fill="#2e2e2e" text-anchor="end">0.00</text>
<text transform="translate(1196.20 410.85) scale(0.9 1)" font-size="10.1" fill="#2e2e2e" text-anchor="end">0.00</text>
<path d="M1207.80 399.45 L1356.60 399.45 M1207.80 413.90 L1356.60 413.90 M1207.80 399.45 L1207.80 413.90 M1356.60 399.45 L1356.60 413.90" fill="none" stroke="#c6c8f4" stroke-width="0.8"/>
<polyline points="1224.10,411.70 1253.40,402.15 1282.50,403.40 1311.40,403.81 1340.50,403.81" fill="none" stroke="#4649cc" stroke-width="1.1"/>
<rect x="1223.00" y="410.60" width="2.2" height="2.2" fill="#3f43c4"/>
<rect x="1252.30" y="401.05" width="2.2" height="2.2" fill="#3f43c4"/>
<rect x="1281.40" y="402.30" width="2.2" height="2.2" fill="#3f43c4"/>
<rect x="1310.30" y="402.71" width="2.2" height="2.2" fill="#3f43c4"/>
<rect x="1339.40" y="402.71" width="2.2" height="2.2" fill="#3f43c4"/>
<text x="58.00" y="425.40" font-size="10" fill="#2e2e2e">Cash Flow Ratio</text>
<text x="327.00" y="425.20" font-size="9" fill="#2e2e2e" font-style="italic">Operating Cash Flow / Debts</text>
<text transform="translate(860.90 425.30) scale(0.9 1)" font-size="10.1" fill="#2e2e2e" text-anchor="end">(0.43)</text>
<text transform="translate(941.30 425.30) scale(0.9 1)" font-size="10.1" fill="#2e2e2e" text-anchor="end">1.21</text>
<text transform="translate(1024.60 425.30) scale(0.9 1)" font-size="10.1" fill="#2e2e2e" text-anchor="end">8.76</text>
<text transform="translate(1107.80 425.30) scale(0.9 1)" font-size="10.1" fill="#2e2e2e" text-anchor="end">36.18</text>
<text transform="translate(1196.20 425.30) scale(0.9 1)" font-size="10.1" fill="#2e2e2e" text-anchor="end">136.59</text>
<path d="M1207.80 413.90 L1356.60 413.90 M1207.80 428.35 L1356.60 428.35 M1207.80 413.90 L1207.80 428.35 M1356.60 413.90 L1356.60 428.35" fill="none" stroke="#c6c8f4" stroke-width="0.8"/>
<polyline points="1224.10,426.15 1253.40,426.04 1282.50,425.51 1311.40,423.60 1340.50,416.60" fill="none" stroke="#4649cc" stroke-width="1.1"/>
<rect x="1223.00" y="425.05" width="2.2" height="2.2" fill="#3f43c4"/>
<rect x="1252.30" y="424.94" width="2.2" height="2.2" fill="#3f43c4"/>
<rect x="1281.40" y="424.41" width="2.2" height="2.2" fill="#3f43c4"/>
<rect x="1310.30" y="422.50" width="2.2" height="2.2" fill="#3f43c4"/>
<rect x="1339.40" y="415.50" width="2.2" height="2.2" fill="#3f43c4"/>
<text x="58.00" y="479.45" font-size="10" fill="#2e2e2e">Current Ratio</text>
<text x="327.00" y="479.25" font-size="9" fill="#2e2e2e" font-style="italic">Current Assets / Current Liabilities</text>
<text transform="translate(857.70 479.35) scale(0.9 1)" font-size="10.1" fill="#2e2e2e" text-anchor="end">30.98</text>
<text transform="translate(941.30 479.35) scale(0.9 1)" font-size="10.1" fill="#2e2e2e" text-anchor="end">19.56</text>
<text transform="translate(1024.60 479.35) scale(0.9 1)" font-size="10.1" fill="#2e2e2e" text-anchor="end">27.43</text>
<text transform="translate(1107.80 479.35) scale(0.9 1)" font-size="10.1" fill="#2e2e2e" text-anchor="end">48.16</text>
<text transform="translate(1196.20 479.35) scale(0.9 1)" font-size="10.1" fill="#2e2e2e" text-anchor="end">80.73</text>
<path d="M1207.80 467.95 L1356.60 467.95 M1207.80 482.40 L1356.60 482.40 M1207.80 467.95 L1207.80 482.40 M1356.60 467.95 L1356.60 482.40" fill="none" stroke="#c6c8f4" stroke-width="0.8"/>
<polyline points="1224.10,478.42 1253.40,480.20 1282.50,478.97 1311.40,475.73 1340.50,470.65" fill="none" stroke="#4649cc" stroke-width="1.1"/>
<rect x="1223.00" y="477.32" width="2.2" height="2.2" fill="#3f43c4"/>
<rect x="1252.30" y="479.10" width="2.2" height="2.2" fill="#3f43c4"/>
<rect x="1281.40" y="477.87" width="2.2" height="2.2" fill="#3f43c4"/>
<rect x="1310.30" y="474.63" width="2.2" height="2.2" fill="#3f43c4"/>
<rect x="1339.40" y="469.55" width="2.2" height="2.2" fill="#3f43c4"/>
<text x="58.00" y="493.90" font-size="10" fill="#2e2e2e">Quick Ratio</text>
<text x="327.00" y="493.70" font-size="9" fill="#2e2e2e" font-style="italic">(Current Assets - Inventory) / Current Liabilities</text>
<text transform="translate(857.70 493.80) scale(0.9 1)" font-size="10.1" fill="#2e2e2e" text-anchor="end">30.86</text>
<text transform="translate(941.30 493.80) scale(0.9 1)" font-size="10.1" fill="#2e2e2e" text-anchor="end">19.37</text>
<text transform="translate(1024.60 493.80) scale(0.9 1)" font-size="10.1" fill="#2e2e2e" text-anchor="end">27.14</text>
<text transform="translate(1107.80 493.80) scale(0.9 1)" font-size="10.1" fill="#2e2e2e" text-anchor="end">47.75</text>
<text transform="translate(1196.20 493.80) scale(0.9 1)" font-size="10.1" fill="#2e2e2e" text-anchor="end">80.21</text>
<path d="M1207.80 482.40 L1356.60 482.40 M1207.80 496.85 L1356.60 496.85 M1207.80 482.40 L1207.80 496.85 M1356.60 482.40 L1356.60 496.85" fill="none" stroke="#c6c8f4" stroke-width="0.8"/>
<polyline points="1224.10,492.85 1253.40,494.65 1282.50,493.43 1311.40,490.20 1340.50,485.10" fill="none" stroke="#4649cc" stroke-width="1.1"/>
<rect x="1223.00" y="491.75" width="2.2" height="2.2" fill="#3f43c4"/>
<rect x="1252.30" y="493.55" width="2.2" height="2.2" fill="#3f43c4"/>
<rect x="1281.40" y="492.33" width="2.2" height="2.2" fill="#3f43c4"/>
<rect x="1310.30" y="489.10" width="2.2" height="2.2" fill="#3f43c4"/>
<rect x="1339.40" y="484.00" width="2.2" height="2.2" fill="#3f43c4"/>
<text x="58.00" y="508.35" font-size="10" fill="#2e2e2e">Cash Ratio</text>
<text x="327.00" y="508.15" font-size="9" fill="#2e2e2e" font-style="italic">Cash / Current Liabilities</text>
<text transform="translate(857.70 508.25) scale(0.9 1)" font-size="10.1" fill="#2e2e2e" text-anchor="end">30.04</text>
<text transform="translate(941.30 508.25) scale(0.9 1)" font-size="10.1" fill="#2e2e2e" text-anchor="end">18.04</text>
<text transform="translate(1024.60 508.25) scale(0.9 1)" font-size="10.1" fill="#2e2e2e" text-anchor="end">24.84</text>
<text transform="translate(1107.80 508.25) scale(0.9 1)" font-size="10.1" fill="#2e2e2e" text-anchor="end">44.22</text>
<text transform="translate(1196.20 508.25) scale(0.9 1)" font-size="10.1" fill="#2e2e2e" text-anchor="end">75.38</text>
<path d="M1207.80 496.85 L1356.60 496.85 M1207.80 511.30 L1356.60 511.30 M1207.80 496.85 L1207.80 511.30 M1356.60 496.85 L1356.60 511.30" fill="none" stroke="#c6c8f4" stroke-width="0.8"/>
<polyline points="1224.10,507.10 1253.40,509.10 1282.50,507.97 1311.40,504.74 1340.50,499.55" fill="none" stroke="#4649cc" stroke-width="1.1"/>
<rect x="1223.00" y="506.00" width="2.2" height="2.2" fill="#3f43c4"/>
<rect x="1252.30" y="508.00" width="2.2" height="2.2" fill="#3f43c4"/>
<rect x="1281.40" y="506.87" width="2.2" height="2.2" fill="#3f43c4"/>
<rect x="1310.30" y="503.64" width="2.2" height="2.2" fill="#3f43c4"/>
<rect x="1339.40" y="498.45" width="2.2" height="2.2" fill="#3f43c4"/>
<text x="58.00" y="562.40" font-size="10" fill="#2e2e2e">Fixed Assets Turnover</text>
<text x="327.00" y="562.20" font-size="9" fill="#2e2e2e" font-style="italic">Sales / Average Fixed Assets</text>
<text transform="translate(857.70 562.30) scale(0.9 1)" font-size="10.1" fill="#2e2e2e" text-anchor="end">5.43</text>
<text transform="translate(941.30 562.30) scale(0.9 1)" font-size="10.1" fill="#2e2e2e" text-anchor="end">14.04</text>
<text transform="translate(1024.60 562.30) scale(0.9 1)" font-size="10.1" fill="#2e2e2e" text-anchor="end">43.36</text>
<text transform="translate(1107.80 562.30) scale(0.9 1)" font-size="10.1" fill="#2e2e2e" text-anchor="end">126.06</text>
<text transform="translate(1196.20 562.30) scale(0.9 1)" font-size="10.1" fill="#2e2e2e" text-anchor="end">348.52</text>
<path d="M1207.80 550.90 L1356.60 550.90 M1207.80 565.35 L1356.60 565.35 M1207.80 550.90 L1207.80 565.35 M1356.60 550.90 L1356.60 565.35" fill="none" stroke="#c6c8f4" stroke-width="0.8"/>
<polyline points="1224.10,563.15 1253.40,562.91 1282.50,562.09 1311.40,559.79 1340.50,553.60" fill="none" stroke="#4649cc" stroke-width="1.1"/>
<rect x="1223.00" y="562.05" width="2.2" height="2.2" fill="#3f43c4"/>
<rect x="1252.30" y="561.81" width="2.2" height="2.2" fill="#3f43c4"/>
<rect x="1281.40" y="560.99" width="2.2" height="2.2" fill="#3f43c4"/>
<rect x="1310.30" y="558.69" width="2.2" height="2.2" fill="#3f43c4"/>
<rect x="1339.40" y="552.50" width="2.2" height="2.2" fill="#3f43c4"/>
<text x="58.00" y="576.85" font-size="10" fill="#2e2e2e">Inventory Turnover Ratio</text>
<text x="327.00" y="576.65" font-size="9" fill="#2e2e2e" font-style="italic">COGS / Average Inventory</text>
<text transform="translate(857.70 576.75) scale(0.9 1)" font-size="10.1" fill="#2e2e2e" text-anchor="end">20.27</text>
<text transform="translate(941.30 576.75) scale(0.9 1)" font-size="10.1" fill="#2e2e2e" text-anchor="end">19.83</text>
<text transform="translate(1024.60 576.75) scale(0.9 1)" font-size="10.1" fill="#2e2e2e" text-anchor="end">19.41</text>
<text transform="translate(1107.80 576.75) scale(0.9 1)" font-size="10.1" fill="#2e2e2e" text-anchor="end">18.78</text>
<text transform="translate(1196.20 576.75) scale(0.9 1)" font-size="10.1" fill="#2e2e2e" text-anchor="end">19.05</text>
<path d="M1207.80 565.35 L1356.60 565.35 M1207.80 579.80 L1356.60 579.80 M1207.80 565.35 L1207.80 579.80 M1356.60 565.35 L1356.60 579.80" fill="none" stroke="#c6c8f4" stroke-width="0.8"/>
<polyline points="1224.10,568.05 1253.40,570.87 1282.50,573.56 1311.40,577.60 1340.50,575.87" fill="none" stroke="#4649cc" stroke-width="1.1"/>
<rect x="1223.00" y="566.95" width="2.2" height="2.2" fill="#3f43c4"/>
<rect x="1252.30" y="569.77" width="2.2" height="2.2" fill="#3f43c4"/>
<rect x="1281.40" y="572.46" width="2.2" height="2.2" fill="#3f43c4"/>
<rect x="1310.30" y="576.50" width="2.2" height="2.2" fill="#3f43c4"/>
<rect x="1339.40" y="574.77" width="2.2" height="2.2" fill="#3f43c4"/>
<text x="58.00" y="591.30" font-size="10" fill="#2e2e2e">Revenue per Employee, $</text>
<text x="327.00" y="591.10" font-size="9" fill="#2e2e2e" font-style="italic">Revenue / FTE</text>
<text transform="translate(857.70 591.20) scale(0.9 1)" font-size="10.1" fill="#2e2e2e" text-anchor="end">226,426</text>
<text transform="translate(941.30 591.20) scale(0.9 1)" font-size="10.1" fill="#2e2e2e" text-anchor="end">337,818</text>
<text transform="translate(1024.60 591.20) scale(0.9 1)" font-size="10.1" fill="#2e2e2e" text-anchor="end">767,550</text>
<text transform="translate(1107.80 591.20) scale(0.9 1)" font-size="10.1" fill="#2e2e2e" text-anchor="end">1,657,814</text>
<text transform="translate(1196.20 591.20) scale(0.9 1)" font-size="10.1" fill="#2e2e2e" text-anchor="end">3,180,750</text>
<path d="M1207.80 579.80 L1356.60 579.80 M1207.80 594.25 L1356.60 594.25 M1207.80 579.80 L1207.80 594.25 M1356.60 579.80 L1356.60 594.25" fill="none" stroke="#c6c8f4" stroke-width="0.8"/>
<polyline points="1224.10,592.05 1253.40,591.69 1282.50,590.30 1311.40,587.42 1340.50,582.50" fill="none" stroke="#4649cc" stroke-width="1.1"/>
<rect x="1223.00" y="590.95" width="2.2" height="2.2" fill="#3f43c4"/>
<rect x="1252.30" y="590.59" width="2.2" height="2.2" fill="#3f43c4"/>
<rect x="1281.40" y="589.20" width="2.2" height="2.2" fill="#3f43c4"/>
<rect x="1310.30" y="586.32" width="2.2" height="2.2" fill="#3f43c4"/>
<rect x="1339.40" y="581.40" width="2.2" height="2.2" fill="#3f43c4"/>
<text x="58.00" y="605.75" font-size="10" fill="#2e2e2e">OPEX per Employee, $</text>
<text x="327.00" y="605.55" font-size="9" fill="#2e2e2e" font-style="italic">OPEX / FTE</text>
<text transform="translate(857.70 605.65) scale(0.9 1)" font-size="10.1" fill="#2e2e2e" text-anchor="end">234,800</text>
<text transform="translate(941.30 605.65) scale(0.9 1)" font-size="10.1" fill="#2e2e2e" text-anchor="end">208,286</text>
<text transform="translate(1024.60 605.65) scale(0.9 1)" font-size="10.1" fill="#2e2e2e" text-anchor="end">253,488</text>
<text transform="translate(1107.80 605.65) scale(0.9 1)" font-size="10.1" fill="#2e2e2e" text-anchor="end">325,938</text>
<text transform="translate(1196.20 605.65) scale(0.9 1)" font-size="10.1" fill="#2e2e2e" text-anchor="end">400,165</text>
<path d="M1207.80 594.25 L1356.60 594.25 M1207.80 608.70 L1356.60 608.70 M1207.80 594.25 L1207.80 608.70 M1356.60 594.25 L1356.60 608.70" fill="none" stroke="#c6c8f4" stroke-width="0.8"/>
<polyline points="1224.10,605.18 1253.40,606.50 1282.50,604.25 1311.40,600.64 1340.50,596.95" fill="none" stroke="#4649cc" stroke-width="1.1"/>
<rect x="1223.00" y="604.08" width="2.2" height="2.2" fill="#3f43c4"/>
<rect x="1252.30" y="605.40" width="2.2" height="2.2" fill="#3f43c4"/>
<rect x="1281.40" y="603.15" width="2.2" height="2.2" fill="#3f43c4"/>
<rect x="1310.30" y="599.54" width="2.2" height="2.2" fill="#3f43c4"/>
<rect x="1339.40" y="595.85" width="2.2" height="2.2" fill="#3f43c4"/>
<text x="58.00" y="620.20" font-size="10" fill="#2e2e2e">EBITDA per Employee, $</text>
<text x="327.00" y="620.00" font-size="9" fill="#2e2e2e" font-style="italic">EBITDA / FTE</text>
<text transform="translate(860.90 620.10) scale(0.9 1)" font-size="10.1" fill="#2e2e2e" text-anchor="end">(33,281)</text>
<text transform="translate(941.30 620.10) scale(0.9 1)" font-size="10.1" fill="#2e2e2e" text-anchor="end">94,736</text>
<text transform="translate(1024.60 620.10) scale(0.9 1)" font-size="10.1" fill="#2e2e2e" text-anchor="end">441,145</text>
<text transform="translate(1107.80 620.10) scale(0.9 1)" font-size="10.1" fill="#2e2e2e" text-anchor="end">1,187,647</text>
<text transform="translate(1196.20 620.10) scale(0.9 1)" font-size="10.1" fill="#2e2e2e" text-anchor="end">2,526,125</text>
<path d="M1207.80 608.70 L1356.60 608.70 M1207.80 623.15 L1356.60 623.15 M1207.80 608.70 L1207.80 623.15 M1356.60 608.70 L1356.60 623.15" fill="none" stroke="#c6c8f4" stroke-width="0.8"/>
<polyline points="1224.10,620.95 1253.40,620.47 1282.50,619.18 1311.40,616.39 1340.50,611.40" fill="none" stroke="#4649cc" stroke-width="1.1"/>
<rect x="1223.00" y="619.85" width="2.2" height="2.2" fill="#3f43c4"/>
<rect x="1252.30" y="619.37" width="2.2" height="2.2" fill="#3f43c4"/>
<rect x="1281.40" y="618.08" width="2.2" height="2.2" fill="#3f43c4"/>
<rect x="1310.30" y="615.29" width="2.2" height="2.2" fill="#3f43c4"/>
<rect x="1339.40" y="610.30" width="2.2" height="2.2" fill="#3f43c4"/>
<text x="58.00" y="674.25" font-size="10" fill="#2e2e2e">Gross Margin %</text>
<text x="327.00" y="674.05" font-size="9" fill="#2e2e2e" font-style="italic">(Revenue - COGS) / Revenue</text>
<text transform="translate(860.90 674.15) scale(0.9 1)" font-size="10.1" fill="#2e2e2e" text-anchor="end">89.0%</text>
<text transform="translate(944.50 674.15) scale(0.9 1)" font-size="10.1" fill="#2e2e2e" text-anchor="end">89.7%</text>
<text transform="translate(1027.80 674.15) scale(0.9 1)" font-size="10.1" fill="#2e2e2e" text-anchor="end">90.5%</text>
<text transform="translate(1111.00 674.15) scale(0.9 1)" font-size="10.1" fill="#2e2e2e" text-anchor="end">91.3%</text>
<text transform="translate(1199.40 674.15) scale(0.9 1)" font-size="10.1" fill="#2e2e2e" text-anchor="end">92.0%</text>
<path d="M1207.80 662.75 L1356.60 662.75 M1207.80 677.20 L1356.60 677.20 M1207.80 662.75 L1207.80 677.20 M1356.60 662.75 L1356.60 677.20" fill="none" stroke="#c6c8f4" stroke-width="0.8"/>
<polyline points="1224.10,675.00 1253.40,672.77 1282.50,670.23 1311.40,667.68 1340.50,665.45" fill="none" stroke="#4649cc" stroke-width="1.1"/>
<rect x="1223.00" y="673.90" width="2.2" height="2.2" fill="#3f43c4"/>
<rect x="1252.30" y="671.67" width="2.2" height="2.2" fill="#3f43c4"/>
<rect x="1281.40" y="669.13" width="2.2" height="2.2" fill="#3f43c4"/>
<rect x="1310.30" y="666.58" width="2.2" height="2.2" fill="#3f43c4"/>
<rect x="1339.40" y="664.35" width="2.2" height="2.2" fill="#3f43c4"/>
<text x="58.00" y="688.70" font-size="10" fill="#2e2e2e">Contribution Margin %</text>
<text x="327.00" y="688.50" font-size="9" fill="#2e2e2e" font-style="italic">(Revenue - COGS - Variable Expenses) / Revenue</text>
<text transform="translate(860.90 688.60) scale(0.9 1)" font-size="10.1" fill="#2e2e2e" text-anchor="end">37.8%</text>
<text transform="translate(944.50 688.60) scale(0.9 1)" font-size="10.1" fill="#2e2e2e" text-anchor="end">56.5%</text>
<text transform="translate(1027.80 688.60) scale(0.9 1)" font-size="10.1" fill="#2e2e2e" text-anchor="end">69.3%</text>
<text transform="translate(1111.00 688.60) scale(0.9 1)" font-size="10.1" fill="#2e2e2e" text-anchor="end">77.1%</text>
<text transform="translate(1199.40 688.60) scale(0.9 1)" font-size="10.1" fill="#2e2e2e" text-anchor="end">82.2%</text>
<path d="M1207.80 677.20 L1356.60 677.20 M1207.80 691.65 L1356.60 691.65 M1207.80 677.20 L1207.80 691.65 M1356.60 677.20 L1356.60 691.65" fill="none" stroke="#c6c8f4" stroke-width="0.8"/>
<polyline points="1224.10,689.45 1253.40,685.43 1282.50,682.67 1311.40,681.00 1340.50,679.90" fill="none" stroke="#4649cc" stroke-width="1.1"/>
<rect x="1223.00" y="688.35" width="2.2" height="2.2" fill="#3f43c4"/>
<rect x="1252.30" y="684.33" width="2.2" height="2.2" fill="#3f43c4"/>
<rect x="1281.40" y="681.57" width="2.2" height="2.2" fill="#3f43c4"/>
<rect x="1310.30" y="679.90" width="2.2" height="2.2" fill="#3f43c4"/>
<rect x="1339.40" y="678.80" width="2.2" height="2.2" fill="#3f43c4"/>
<text x="58.00" y="703.15" font-size="10" fill="#2e2e2e">EBITDA %</text>
<text x="327.00" y="702.95" font-size="9" fill="#2e2e2e" font-style="italic">(Revenue - COGS - Var Expenses - Fix Expenses) / Revenue</text>
<text transform="translate(860.90 703.05) scale(0.9 1)" font-size="10.1" fill="#2e2e2e" text-anchor="end">-14.7%</text>
<text transform="translate(944.50 703.05) scale(0.9 1)" font-size="10.1" fill="#2e2e2e" text-anchor="end">28.0%</text>
<text transform="translate(1027.80 703.05) scale(0.9 1)" font-size="10.1" fill="#2e2e2e" text-anchor="end">57.5%</text>
<text transform="translate(1111.00 703.05) scale(0.9 1)" font-size="10.1" fill="#2e2e2e" text-anchor="end">71.6%</text>
<text transform="translate(1199.40 703.05) scale(0.9 1)" font-size="10.1" fill="#2e2e2e" text-anchor="end">79.4%</text>
<path d="M1207.80 691.65 L1356.60 691.65 M1207.80 706.10 L1356.60 706.10 M1207.80 691.65 L1207.80 706.10 M1356.60 691.65 L1356.60 706.10" fill="none" stroke="#c6c8f4" stroke-width="0.8"/>
<polyline points="1224.10,703.90 1253.40,699.57 1282.50,696.57 1311.40,695.14 1340.50,694.35" fill="none" stroke="#4649cc" stroke-width="1.1"/>
<rect x="1223.00" y="702.80" width="2.2" height="2.2" fill="#3f43c4"/>
<rect x="1252.30" y="698.47" width="2.2" height="2.2" fill="#3f43c4"/>
<rect x="1281.40" y="695.47" width="2.2" height="2.2" fill="#3f43c4"/>
<rect x="1310.30" y="694.04" width="2.2" height="2.2" fill="#3f43c4"/>
<rect x="1339.40" y="693.25" width="2.2" height="2.2" fill="#3f43c4"/>
<text x="58.00" y="717.60" font-size="10" fill="#2e2e2e">EBIT %</text>
<text x="327.00" y="717.40" font-size="9" fill="#2e2e2e" font-style="italic">(EBITDA - Depreciation &amp; Amortization) / Revenue</text>
<text transform="translate(860.90 717.50) scale(0.9 1)" font-size="10.1" fill="#2e2e2e" text-anchor="end">-17.0%</text>
<text transform="translate(944.50 717.50) scale(0.9 1)" font-size="10.1" fill="#2e2e2e" text-anchor="end">27.2%</text>
<text transform="translate(1027.80 717.50) scale(0.9 1)" font-size="10.1" fill="#2e2e2e" text-anchor="end">57.2%</text>
<text transform="translate(1111.00 717.50) scale(0.9 1)" font-size="10.1" fill="#2e2e2e" text-anchor="end">71.5%</text>
<text transform="translate(1199.40 717.50) scale(0.9 1)" font-size="10.1" fill="#2e2e2e" text-anchor="end">79.4%</text>
<path d="M1207.80 706.10 L1356.60 706.10 M1207.80 720.55 L1356.60 720.55 M1207.80 706.10 L1207.80 720.55 M1356.60 706.10 L1356.60 720.55" fill="none" stroke="#c6c8f4" stroke-width="0.8"/>
<polyline points="1224.10,718.35 1253.40,713.97 1282.50,711.00 1311.40,709.58 1340.50,708.80" fill="none" stroke="#4649cc" stroke-width="1.1"/>
<rect x="1223.00" y="717.25" width="2.2" height="2.2" fill="#3f43c4"/>
<rect x="1252.30" y="712.87" width="2.2" height="2.2" fill="#3f43c4"/>
<rect x="1281.40" y="709.90" width="2.2" height="2.2" fill="#3f43c4"/>
<rect x="1310.30" y="708.48" width="2.2" height="2.2" fill="#3f43c4"/>
<rect x="1339.40" y="707.70" width="2.2" height="2.2" fill="#3f43c4"/>
<text x="58.00" y="732.05" font-size="10" fill="#2e2e2e">Net Profit Before Tax %</text>
<text x="327.00" y="731.85" font-size="9" fill="#2e2e2e" font-style="italic">(EBIT - Interest Expenses) / Revenue</text>
<text transform="translate(860.90 731.95) scale(0.9 1)" font-size="10.1" fill="#2e2e2e" text-anchor="end">-20.2%</text>
<text transform="translate(944.50 731.95) scale(0.9 1)" font-size="10.1" fill="#2e2e2e" text-anchor="end">26.2%</text>
<text transform="translate(1027.80 731.95) scale(0.9 1)" font-size="10.1" fill="#2e2e2e" text-anchor="end">56.9%</text>
<text transform="translate(1111.00 731.95) scale(0.9 1)" font-size="10.1" fill="#2e2e2e" text-anchor="end">71.4%</text>
<text transform="translate(1199.40 731.95) scale(0.9 1)" font-size="10.1" fill="#2e2e2e" text-anchor="end">79.3%</text>
<path d="M1207.80 720.55 L1356.60 720.55 M1207.80 735.00 L1356.60 735.00 M1207.80 720.55 L1207.80 735.00 M1356.60 720.55 L1356.60 735.00" fill="none" stroke="#c6c8f4" stroke-width="0.8"/>
<polyline points="1224.10,732.80 1253.40,728.35 1282.50,725.40 1311.40,724.01 1340.50,723.25" fill="none" stroke="#4649cc" stroke-width="1.1"/>
<rect x="1223.00" y="731.70" width="2.2" height="2.2" fill="#3f43c4"/>
<rect x="1252.30" y="727.25" width="2.2" height="2.2" fill="#3f43c4"/>
<rect x="1281.40" y="724.30" width="2.2" height="2.2" fill="#3f43c4"/>
<rect x="1310.30" y="722.91" width="2.2" height="2.2" fill="#3f43c4"/>
<rect x="1339.40" y="722.15" width="2.2" height="2.2" fill="#3f43c4"/>
<text x="58.00" y="746.50" font-size="10" fill="#2e2e2e">Net Profit After Tax %</text>
<text x="327.00" y="746.30" font-size="9" fill="#2e2e2e" font-style="italic">(EBIT - Interest Expenses - Taxes) / Revenue</text>
<text transform="translate(860.90 746.40) scale(0.9 1)" font-size="10.1" fill="#2e2e2e" text-anchor="end">-20.2%</text>
<text transform="translate(944.50 746.40) scale(0.9 1)" font-size="10.1" fill="#2e2e2e" text-anchor="end">19.7%</text>
<text transform="translate(1027.80 746.40) scale(0.9 1)" font-size="10.1" fill="#2e2e2e" text-anchor="end">42.7%</text>
<text transform="translate(1111.00 746.40) scale(0.9 1)" font-size="10.1" fill="#2e2e2e" text-anchor="end">53.6%</text>
<text transform="translate(1199.40 746.40) scale(0.9 1)" font-size="10.1" fill="#2e2e2e" text-anchor="end">59.5%</text>
<path d="M1207.80 735.00 L1356.60 735.00 M1207.80 749.45 L1356.60 749.45 M1207.80 735.00 L1207.80 749.45 M1356.60 735.00 L1356.60 749.45" fill="none" stroke="#c6c8f4" stroke-width="0.8"/>
<polyline points="1224.10,747.25 1253.40,742.47 1282.50,739.71 1311.40,738.41 1340.50,737.70" fill="none" stroke="#4649cc" stroke-width="1.1"/>
<rect x="1223.00" y="746.15" width="2.2" height="2.2" fill="#3f43c4"/>
<rect x="1252.30" y="741.37" width="2.2" height="2.2" fill="#3f43c4"/>
<rect x="1281.40" y="738.61" width="2.2" height="2.2" fill="#3f43c4"/>
<rect x="1310.30" y="737.31" width="2.2" height="2.2" fill="#3f43c4"/>
<rect x="1339.40" y="736.60" width="2.2" height="2.2" fill="#3f43c4"/>
<text x="58.00" y="800.55" font-size="10" fill="#2e2e2e">ROA (Return of Assets)</text>
<text x="327.00" y="800.35" font-size="9" fill="#2e2e2e" font-style="italic">Net Income / Total Assets</text>
<text transform="translate(860.90 800.45) scale(0.9 1)" font-size="10.1" fill="#2e2e2e" text-anchor="end">(0.13)</text>
<text transform="translate(941.30 800.45) scale(0.9 1)" font-size="10.1" fill="#2e2e2e" text-anchor="end">0.18</text>
<text transform="translate(1024.60 800.45) scale(0.9 1)" font-size="10.1" fill="#2e2e2e" text-anchor="end">0.69</text>
<text transform="translate(1107.80 800.45) scale(0.9 1)" font-size="10.1" fill="#2e2e2e" text-anchor="end">0.89</text>
<text transform="translate(1196.20 800.45) scale(0.9 1)" font-size="10.1" fill="#2e2e2e" text-anchor="end">0.96</text>
<path d="M1207.80 789.05 L1356.60 789.05 M1207.80 803.50 L1356.60 803.50 M1207.80 789.05 L1207.80 803.50 M1356.60 789.05 L1356.60 803.50" fill="none" stroke="#c6c8f4" stroke-width="0.8"/>
<polyline points="1224.10,801.30 1253.40,798.58 1282.50,794.12 1311.40,792.36 1340.50,791.75" fill="none" stroke="#4649cc" stroke-width="1.1"/>
<rect x="1223.00" y="800.20" width="2.2" height="2.2" fill="#3f43c4"/>
<rect x="1252.30" y="797.48" width="2.2" height="2.2" fill="#3f43c4"/>
<rect x="1281.40" y="793.02" width="2.2" height="2.2" fill="#3f43c4"/>
<rect x="1310.30" y="791.26" width="2.2" height="2.2" fill="#3f43c4"/>
<rect x="1339.40" y="790.65" width="2.2" height="2.2" fill="#3f43c4"/>
<rect x="22.80" y="219.20" width="1347.50" height="0.70" fill="#c4c4c4"/>
<rect x="5.70" y="133.00" width="1364.60" height="10.90" fill="#0d0d0d"/>
<rect x="22.90" y="133.00" width="11.00" height="10.60" fill="#5e5e5e"/>
<rect x="22.90" y="143.00" width="11.00" height="1.00" fill="#3aa05a"/>
<path d="M13.5 143 L21 135.8 L21 143 Z" fill="#6a6a6a"/>
<rect x="33.70" y="133.20" width="0.90" height="10.60" fill="#333"/>
<text x="28.50" y="141.60" font-size="8.5" fill="#e8e8e8" text-anchor="middle">A</text>
<rect x="46.00" y="133.20" width="0.90" height="10.60" fill="#333"/>
<text x="40.35" y="141.60" font-size="8.5" fill="#e8e8e8" text-anchor="middle">B</text>
<rect x="57.40" y="133.20" width="0.90" height="10.60" fill="#333"/>
<text x="52.20" y="141.60" font-size="8.5" fill="#e8e8e8" text-anchor="middle">C</text>
<rect x="108.30" y="133.20" width="0.90" height="10.60" fill="#333"/>
<text x="83.35" y="141.60" font-size="8.5" fill="#e8e8e8" text-anchor="middle">D</text>
<rect x="178.00" y="133.20" width="0.90" height="10.60" fill="#333"/>
<text x="143.65" y="141.60" font-size="8.5" fill="#e8e8e8" text-anchor="middle">E</text>
<rect x="246.90" y="133.20" width="0.90" height="10.60" fill="#333"/>
<text x="212.95" y="141.60" font-size="8.5" fill="#e8e8e8" text-anchor="middle">F</text>
<rect x="323.90" y="133.20" width="0.90" height="10.60" fill="#333"/>
<text x="285.90" y="141.60" font-size="8.5" fill="#e8e8e8" text-anchor="middle">G</text>
<rect x="779.00" y="133.20" width="0.90" height="10.60" fill="#333"/>
<text x="551.95" y="141.60" font-size="8.5" fill="#e8e8e8" text-anchor="middle">H</text>
<rect x="862.20" y="133.20" width="0.90" height="10.60" fill="#333"/>
<text x="821.10" y="141.60" font-size="8.5" fill="#e8e8e8" text-anchor="middle">I</text>
<rect x="945.80" y="133.20" width="0.90" height="10.60" fill="#333"/>
<text x="904.50" y="141.60" font-size="8.5" fill="#e8e8e8" text-anchor="middle">J</text>
<rect x="1029.10" y="133.20" width="0.90" height="10.60" fill="#333"/>
<text x="987.95" y="141.60" font-size="8.5" fill="#e8e8e8" text-anchor="middle">K</text>
<rect x="1112.30" y="133.20" width="0.90" height="10.60" fill="#333"/>
<text x="1071.20" y="141.60" font-size="8.5" fill="#e8e8e8" text-anchor="middle">L</text>
<rect x="1200.70" y="133.20" width="0.90" height="10.60" fill="#333"/>
<text x="1157.00" y="141.60" font-size="8.5" fill="#e8e8e8" text-anchor="middle">M</text>
<rect x="1208.50" y="133.20" width="0.90" height="10.60" fill="#333"/>
<text x="1205.10" y="141.60" font-size="8.5" fill="#e8e8e8" text-anchor="middle">N</text>
<text x="1282.70" y="141.60" font-size="8.5" fill="#e8e8e8" text-anchor="middle">O</text>
<rect x="1356.00" y="133.20" width="0.90" height="10.60" fill="#333"/>
<rect x="5.70" y="143.90" width="17.10" height="656.10" fill="#0c0c0c"/>
<rect x="5.70" y="143.90" width="16.10" height="18.40" fill="#5e5e5e"/>
<rect x="5.70" y="162.10" width="17.10" height="0.70" fill="#2e2e2e"/>
<text transform="translate(14.2 160.00) scale(0.84 1)" font-size="10.1" fill="#f0f0f0" text-anchor="middle">1</text>
<rect x="5.70" y="178.30" width="17.10" height="0.70" fill="#2e2e2e"/>
<text transform="translate(14.2 176.20) scale(0.84 1)" font-size="10.1" fill="#f0f0f0" text-anchor="middle">2</text>
<rect x="5.70" y="193.90" width="17.10" height="0.70" fill="#2e2e2e"/>
<text transform="translate(14.2 191.80) scale(0.84 1)" font-size="10.1" fill="#f0f0f0" text-anchor="middle">3</text>
<rect x="5.70" y="205.60" width="17.10" height="0.70" fill="#2e2e2e"/>
<text transform="translate(14.2 203.50) scale(0.84 1)" font-size="10.1" fill="#f0f0f0" text-anchor="middle">4</text>
<rect x="5.70" y="219.30" width="17.10" height="0.70" fill="#2e2e2e"/>
<text transform="translate(14.2 217.20) scale(0.84 1)" font-size="10.1" fill="#f0f0f0" text-anchor="middle">6</text>
<rect x="5.70" y="230.10" width="17.10" height="0.70" fill="#2e2e2e"/>
<text transform="translate(14.2 228.00) scale(0.84 1)" font-size="10.1" fill="#f0f0f0" text-anchor="middle">8</text>
<rect x="5.70" y="247.30" width="17.10" height="0.70" fill="#2e2e2e"/>
<text transform="translate(14.2 245.20) scale(0.84 1)" font-size="10.1" fill="#f0f0f0" text-anchor="middle">9</text>
<rect x="5.70" y="258.50" width="17.10" height="0.70" fill="#2e2e2e"/>
<text transform="translate(14.2 256.40) scale(0.84 1)" font-size="10.1" fill="#f0f0f0" text-anchor="middle">10</text>
<rect x="5.70" y="272.95" width="17.10" height="0.70" fill="#2e2e2e"/>
<text transform="translate(14.2 270.85) scale(0.84 1)" font-size="10.1" fill="#f0f0f0" text-anchor="middle">11</text>
<rect x="5.70" y="287.40" width="17.10" height="0.70" fill="#2e2e2e"/>
<text transform="translate(14.2 285.30) scale(0.84 1)" font-size="10.1" fill="#f0f0f0" text-anchor="middle">12</text>
<rect x="5.70" y="301.85" width="17.10" height="0.70" fill="#2e2e2e"/>
<text transform="translate(14.2 299.75) scale(0.84 1)" font-size="10.1" fill="#f0f0f0" text-anchor="middle">13</text>
<rect x="5.70" y="316.30" width="17.10" height="0.70" fill="#2e2e2e"/>
<text transform="translate(14.2 314.20) scale(0.84 1)" font-size="10.1" fill="#f0f0f0" text-anchor="middle">14</text>
<rect x="5.70" y="327.50" width="17.10" height="0.70" fill="#2e2e2e"/>
<text transform="translate(14.2 325.40) scale(0.84 1)" font-size="10.1" fill="#f0f0f0" text-anchor="middle">15</text>
<rect x="5.70" y="344.70" width="17.10" height="0.70" fill="#2e2e2e"/>
<text transform="translate(14.2 342.60) scale(0.84 1)" font-size="10.1" fill="#f0f0f0" text-anchor="middle">16</text>
<rect x="5.70" y="355.90" width="17.10" height="0.70" fill="#2e2e2e"/>
<text transform="translate(14.2 353.80) scale(0.84 1)" font-size="10.1" fill="#f0f0f0" text-anchor="middle">17</text>
<rect x="5.70" y="370.35" width="17.10" height="0.70" fill="#2e2e2e"/>
<text transform="translate(14.2 368.25) scale(0.84 1)" font-size="10.1" fill="#f0f0f0" text-anchor="middle">18</text>
<rect x="5.70" y="384.80" width="17.10" height="0.70" fill="#2e2e2e"/>
<text transform="translate(14.2 382.70) scale(0.84 1)" font-size="10.1" fill="#f0f0f0" text-anchor="middle">19</text>
<rect x="5.70" y="399.25" width="17.10" height="0.70" fill="#2e2e2e"/>
<text transform="translate(14.2 397.15) scale(0.84 1)" font-size="10.1" fill="#f0f0f0" text-anchor="middle">20</text>
<rect x="5.70" y="413.70" width="17.10" height="0.70" fill="#2e2e2e"/>
<text transform="translate(14.2 411.60) scale(0.84 1)" font-size="10.1" fill="#f0f0f0" text-anchor="middle">21</text>
<rect x="5.70" y="428.15" width="17.10" height="0.70" fill="#2e2e2e"/>
<text transform="translate(14.2 426.05) scale(0.84 1)" font-size="10.1" fill="#f0f0f0" text-anchor="middle">22</text>
<rect x="5.70" y="439.35" width="17.10" height="0.70" fill="#2e2e2e"/>
<text transform="translate(14.2 437.25) scale(0.84 1)" font-size="10.1" fill="#f0f0f0" text-anchor="middle">23</text>
<rect x="5.70" y="456.55" width="17.10" height="0.70" fill="#2e2e2e"/>
<text transform="translate(14.2 454.45) scale(0.84 1)" font-size="10.1" fill="#f0f0f0" text-anchor="middle">24</text>
<rect x="5.70" y="467.75" width="17.10" height="0.70" fill="#2e2e2e"/>
<text transform="translate(14.2 465.65) scale(0.84 1)" font-size="10.1" fill="#f0f0f0" text-anchor="middle">25</text>
<rect x="5.70" y="482.20" width="17.10" height="0.70" fill="#2e2e2e"/>
<text transform="translate(14.2 480.10) scale(0.84 1)" font-size="10.1" fill="#f0f0f0" text-anchor="middle">26</text>
<rect x="5.70" y="496.65" width="17.10" height="0.70" fill="#2e2e2e"/>
<text transform="translate(14.2 494.55) scale(0.84 1)" font-size="10.1" fill="#f0f0f0" text-anchor="middle">27</text>
<rect x="5.70" y="511.10" width="17.10" height="0.70" fill="#2e2e2e"/>
<text transform="translate(14.2 509.00) scale(0.84 1)" font-size="10.1" fill="#f0f0f0" text-anchor="middle">28</text>
<rect x="5.70" y="522.30" width="17.10" height="0.70" fill="#2e2e2e"/>
<text transform="translate(14.2 520.20) scale(0.84 1)" font-size="10.1" fill="#f0f0f0" text-anchor="middle">29</text>
<rect x="5.70" y="539.50" width="17.10" height="0.70" fill="#2e2e2e"/>
<text transform="translate(14.2 537.40) scale(0.84 1)" font-size="10.1" fill="#f0f0f0" text-anchor="middle">30</text>
<rect x="5.70" y="550.70" width="17.10" height="0.70" fill="#2e2e2e"/>
<text transform="translate(14.2 548.60) scale(0.84 1)" font-size="10.1" fill="#f0f0f0" text-anchor="middle">31</text>
<rect x="5.70" y="565.15" width="17.10" height="0.70" fill="#2e2e2e"/>
<text transform="translate(14.2 563.05) scale(0.84 1)" font-size="10.1" fill="#f0f0f0" text-anchor="middle">32</text>
<rect x="5.70" y="579.60" width="17.10" height="0.70" fill="#2e2e2e"/>
<text transform="translate(14.2 577.50) scale(0.84 1)" font-size="10.1" fill="#f0f0f0" text-anchor="middle">33</text>
<rect x="5.70" y="594.05" width="17.10" height="0.70" fill="#2e2e2e"/>
<text transform="translate(14.2 591.95) scale(0.84 1)" font-size="10.1" fill="#f0f0f0" text-anchor="middle">34</text>
<rect x="5.70" y="608.50" width="17.10" height="0.70" fill="#2e2e2e"/>
<text transform="translate(14.2 606.40) scale(0.84 1)" font-size="10.1" fill="#f0f0f0" text-anchor="middle">35</text>
<rect x="5.70" y="622.95" width="17.10" height="0.70" fill="#2e2e2e"/>
<text transform="translate(14.2 620.85) scale(0.84 1)" font-size="10.1" fill="#f0f0f0" text-anchor="middle">36</text>
<rect x="5.70" y="634.15" width="17.10" height="0.70" fill="#2e2e2e"/>
<text transform="translate(14.2 632.05) scale(0.84 1)" font-size="10.1" fill="#f0f0f0" text-anchor="middle">37</text>
<rect x="5.70" y="651.35" width="17.10" height="0.70" fill="#2e2e2e"/>
<text transform="translate(14.2 649.25) scale(0.84 1)" font-size="10.1" fill="#f0f0f0" text-anchor="middle">38</text>
<rect x="5.70" y="662.55" width="17.10" height="0.70" fill="#2e2e2e"/>
<text transform="translate(14.2 660.45) scale(0.84 1)" font-size="10.1" fill="#f0f0f0" text-anchor="middle">39</text>
<rect x="5.70" y="677.00" width="17.10" height="0.70" fill="#2e2e2e"/>
<text transform="translate(14.2 674.90) scale(0.84 1)" font-size="10.1" fill="#f0f0f0" text-anchor="middle">40</text>
<rect x="5.70" y="691.45" width="17.10" height="0.70" fill="#2e2e2e"/>
<text transform="translate(14.2 689.35) scale(0.84 1)" font-size="10.1" fill="#f0f0f0" text-anchor="middle">41</text>
<rect x="5.70" y="705.90" width="17.10" height="0.70" fill="#2e2e2e"/>
<text transform="translate(14.2 703.80) scale(0.84 1)" font-size="10.1" fill="#f0f0f0" text-anchor="middle">42</text>
<rect x="5.70" y="720.35" width="17.10" height="0.70" fill="#2e2e2e"/>
<text transform="translate(14.2 718.25) scale(0.84 1)" font-size="10.1" fill="#f0f0f0" text-anchor="middle">43</text>
<rect x="5.70" y="734.80" width="17.10" height="0.70" fill="#2e2e2e"/>
<text transform="translate(14.2 732.70) scale(0.84 1)" font-size="10.1" fill="#f0f0f0" text-anchor="middle">44</text>
<rect x="5.70" y="749.25" width="17.10" height="0.70" fill="#2e2e2e"/>
<text transform="translate(14.2 747.15) scale(0.84 1)" font-size="10.1" fill="#f0f0f0" text-anchor="middle">45</text>
<rect x="5.70" y="760.45" width="17.10" height="0.70" fill="#2e2e2e"/>
<text transform="translate(14.2 758.35) scale(0.84 1)" font-size="10.1" fill="#f0f0f0" text-anchor="middle">46</text>
<rect x="5.70" y="777.65" width="17.10" height="0.70" fill="#2e2e2e"/>
<text transform="translate(14.2 775.55) scale(0.84 1)" font-size="10.1" fill="#f0f0f0" text-anchor="middle">47</text>
<rect x="5.70" y="788.85" width="17.10" height="0.70" fill="#2e2e2e"/>
<text transform="translate(14.2 786.75) scale(0.84 1)" font-size="10.1" fill="#f0f0f0" text-anchor="middle">48</text>
<rect x="5.70" y="803.30" width="17.10" height="0.70" fill="#2e2e2e"/>
<text transform="translate(14.2 800.00) scale(0.84 1)" font-size="10.1" fill="#f0f0f0" text-anchor="middle">49</text>
<rect x="5.70" y="219.00" width="17.10" height="1.20" fill="#6a6a6a"/>
<rect x="22.30" y="143.90" width="1.20" height="18.40" fill="#2f9a55"/>
<rect x="1370.30" y="133.00" width="14.40" height="667.00" fill="#161616"/>
<path d="M1374.2 141.6 L1377.6 137.0 L1381.0 141.6 Z" fill="#9a9a9a"/>
<rect x="1374.7" y="145.8" width="5.8" height="587" rx="2.9" fill="#9e9e9e"/>
<path d="M1374.4 792.4 L1377.8 797.0 L1381.2 792.4 Z" fill="#9a9a9a"/>
<rect x="5.70" y="800.00" width="1379.00" height="23.00" fill="#090909"/>
<rect x="5.70" y="822.80" width="1379.00" height="15.70" fill="#141414"/>
<rect x="5.70" y="822.60" width="1379.00" height="0.80" fill="#202020"/>
<path d="M25.8 808.2 L22.6 811.2 L25.8 814.2" fill="none" stroke="#bdbdbd" stroke-width="1"/>
<path d="M46.4 808.2 L49.6 811.2 L46.4 814.2" fill="none" stroke="#bdbdbd" stroke-width="1"/>
<circle cx="67.20" cy="811.4" r="0.9" fill="#d8d8d8"/>
<circle cx="69.80" cy="811.4" r="0.9" fill="#d8d8d8"/>
<circle cx="72.40" cy="811.4" r="0.9" fill="#d8d8d8"/>
<rect x="85.10" y="803.3" width="50.40" height="16.9" rx="2.6" fill="#f7e463"/>
<text x="91.90" y="815.60" font-size="10" fill="#1b1b1b" textLength="37.00" lengthAdjust="spacingAndGlyphs">Revenue</text>
<rect x="138.10" y="804.60" width="0.80" height="14.40" fill="#232323"/>
<rect x="141.80" y="803.3" width="75.30" height="16.9" rx="2.6" fill="#f7e463"/>
<text x="148.10" y="815.60" font-size="10" fill="#1b1b1b" textLength="63.40" lengthAdjust="spacingAndGlyphs">COGS &amp; OPEX</text>
<rect x="219.70" y="804.60" width="0.80" height="14.40" fill="#232323"/>
<rect x="223.70" y="803.3" width="42.50" height="16.9" rx="2.6" fill="#f7e463"/>
<text x="230.40" y="815.60" font-size="10" fill="#1b1b1b" textLength="29.00" lengthAdjust="spacingAndGlyphs">Payroll</text>
<rect x="268.80" y="804.60" width="0.80" height="14.40" fill="#232323"/>
<rect x="272.50" y="803.3" width="41.60" height="16.9" rx="2.6" fill="#f7e463"/>
<text x="278.80" y="815.60" font-size="10" fill="#1b1b1b" textLength="28.90" lengthAdjust="spacingAndGlyphs">CAPEX</text>
<rect x="316.70" y="804.60" width="0.80" height="14.40" fill="#232323"/>
<rect x="320.60" y="803.3" width="53.60" height="16.9" rx="2.6" fill="#f7e463"/>
<text x="326.40" y="815.60" font-size="10" fill="#1b1b1b" textLength="41.50" lengthAdjust="spacingAndGlyphs">CapTable</text>
<rect x="376.80" y="804.60" width="0.80" height="14.40" fill="#232323"/>
<rect x="381.00" y="803.3" width="42.80" height="16.9" rx="2.6" fill="#f7e463"/>
<text x="386.80" y="815.60" font-size="10" fill="#1b1b1b" textLength="31.00" lengthAdjust="spacingAndGlyphs">Capital</text>
<rect x="426.40" y="804.60" width="0.80" height="14.40" fill="#232323"/>
<rect x="430.10" y="803.3" width="19.70" height="16.9" rx="2.6" fill="#4cb2e6"/>
<text x="436.40" y="815.60" font-size="10" fill="#1b1b1b" textLength="7.60" lengthAdjust="spacingAndGlyphs">IS</text>
<rect x="452.40" y="804.60" width="0.80" height="14.40" fill="#232323"/>
<rect x="456.60" y="803.3" width="22.60" height="16.9" rx="2.6" fill="#4cb2e6"/>
<text x="462.90" y="815.60" font-size="10" fill="#1b1b1b" textLength="11.30" lengthAdjust="spacingAndGlyphs">CF</text>
<rect x="481.80" y="804.60" width="0.80" height="14.40" fill="#232323"/>
<rect x="485.80" y="803.3" width="23.20" height="16.9" rx="2.6" fill="#4cb2e6"/>
<text x="491.80" y="815.60" font-size="10" fill="#1b1b1b" textLength="10.80" lengthAdjust="spacingAndGlyphs">BS</text>
<rect x="511.60" y="804.60" width="0.80" height="14.40" fill="#232323"/>
<rect x="515.30" y="803.3" width="54.60" height="16.9" rx="2.6" fill="#4cb2e6"/>
<text x="521.00" y="815.60" font-size="10" fill="#1b1b1b" textLength="42.10" lengthAdjust="spacingAndGlyphs">Scenarios</text>
<rect x="572.50" y="804.60" width="0.80" height="14.40" fill="#232323"/>
<rect x="576.50" y="803.3" width="54.60" height="16.9" rx="2.6" fill="#4cb2e6"/>
<text x="582.50" y="815.60" font-size="10" fill="#1b1b1b" textLength="41.80" lengthAdjust="spacingAndGlyphs">Valuation</text>
<rect x="633.70" y="804.60" width="0.80" height="14.40" fill="#232323"/>
<rect x="637.70" y="803.3" width="54.20" height="16.9" rx="2.6" fill="#4cb2e6"/>
<text x="644.50" y="815.60" font-size="10" fill="#1b1b1b" textLength="41.20" lengthAdjust="spacingAndGlyphs">Summary</text>
<rect x="694.50" y="804.60" width="0.80" height="14.40" fill="#232323"/>
<rect x="698.70" y="803.3" width="22.50" height="16.9" rx="2.6" fill="#4cb2e6"/>
<text x="704.90" y="815.60" font-size="10" fill="#1b1b1b" textLength="10.20" lengthAdjust="spacingAndGlyphs">BE</text>
<rect x="723.80" y="804.60" width="0.80" height="14.40" fill="#232323"/>
<rect x="728.00" y="803.3" width="34.10" height="16.9" rx="2.6" fill="#4cb2e6"/>
<text x="734.20" y="815.60" font-size="10" fill="#1b1b1b" textLength="22.00" lengthAdjust="spacingAndGlyphs">ROIC</text>
<rect x="764.70" y="804.60" width="0.80" height="14.40" fill="#232323"/>
<rect x="768.60" y="803.3" width="40.20" height="16.9" rx="2.6" fill="#4cb2e6"/>
<text x="774.80" y="815.60" font-size="10" fill="#1b1b1b" textLength="27.50" lengthAdjust="spacingAndGlyphs">Charts</text>
<rect x="811.40" y="804.60" width="0.80" height="14.40" fill="#232323"/>
<rect x="815.60" y="803.3" width="30.00" height="16.9" rx="2.6" fill="#4cb2e6"/>
<text x="821.80" y="815.60" font-size="10" fill="#1b1b1b" textLength="17.60" lengthAdjust="spacingAndGlyphs">KPIs</text>
<rect x="848.20" y="804.60" width="0.80" height="14.40" fill="#232323"/>
<rect x="852.10" y="803.3" width="81.00" height="16.9" rx="2.6" fill="#4cb2e6"/>
<text x="858.00" y="815.60" font-size="10" fill="#1b1b1b" textLength="68.30" lengthAdjust="spacingAndGlyphs">Sources &amp; Uses</text>
<rect x="935.70" y="804.60" width="0.80" height="14.40" fill="#232323"/>
<defs><linearGradient id="rt" x1="0" y1="0" x2="0" y2="1"><stop offset="0" stop-color="#f7fafd"/><stop offset="1" stop-color="#d9eaf7"/></linearGradient></defs>
<rect x="939.3" y="800.4" width="39.6" height="19.9" rx="2.4" fill="url(#rt)"/>
<text x="945.50" y="813.80" font-size="10" fill="#1b1b1b" textLength="27.20" lengthAdjust="spacingAndGlyphs">Ratios</text>
<rect x="945.40" y="816.60" width="27.40" height="1.50" fill="#2f9a55"/>
<rect x="985.0" y="803.3" width="9" height="16.9" rx="2.4" fill="#4cb2e6"/>
<rect x="992.60" y="803.30" width="1.40" height="16.90" fill="#090909"/>
<rect x="982.20" y="804.60" width="0.80" height="14.40" fill="#232323"/>
<circle cx="1000.80" cy="811.2" r="1.05" fill="#e8e8e8"/>
<circle cx="1003.40" cy="811.2" r="1.05" fill="#e8e8e8"/>
<circle cx="1006.00" cy="811.2" r="1.05" fill="#e8e8e8"/>
<path d="M1026 806.8 L1026 815.6 M1021.6 811.2 L1030.4 811.2" stroke="#e0e0e0" stroke-width="1"/>
<circle cx="1049.6" cy="808.60" r="0.8" fill="#e0e0e0"/>
<circle cx="1049.6" cy="811.20" r="0.8" fill="#e0e0e0"/>
<circle cx="1049.6" cy="813.80" r="0.8" fill="#e0e0e0"/>
<path d="M1069.4 807.8 L1065.2 811.2 L1069.4 814.6 Z" fill="#9a9a9a"/>
<rect x="1073.7" y="808.2" width="274" height="6" rx="3" fill="#a0a0a0"/>
<path d="M1361.8 807.8 L1366 811.2 L1361.8 814.6 Z" fill="#9a9a9a"/>
<text x="12.90" y="834.00" font-size="8.6" fill="#e2e2e2" textLength="20.50" lengthAdjust="spacingAndGlyphs">Ready</text>
<rect x="47.4" y="827" width="10.4" height="8.6" rx="1" fill="none" stroke="#bdbdbd" stroke-width="0.9"/>
<circle cx="54.4" cy="832.6" r="3.2" fill="#141414" stroke="#bdbdbd" stroke-width="0.9"/>
<path d="M71 826.6 L79.6 836 M79.6 826.6 L71 836" stroke="#bdbdbd" stroke-width="1"/><circle cx="75.3" cy="827.4" r="1.4" fill="none" stroke="#bdbdbd" stroke-width="0.8"/>
<text x="83.20" y="834.00" font-size="8.2" fill="#f4f4f4" font-weight="bold" textLength="89.60" lengthAdjust="spacingAndGlyphs" stroke="#f4f4f4" stroke-width="0.25">Accessibility: Investigate</text>
<rect x="1171.00" y="823.40" width="28.60" height="15.20" fill="#262626"/>
<rect x="1180.2" y="826.6" width="10" height="9.4" fill="none" stroke="#d8d8d8" stroke-width="1"/>
<path d="M1183.5 826.6 L1183.5 836 M1186.8 826.6 L1186.8 836 M1180.2 829.7 L1190.2 829.7 M1180.2 832.8 L1190.2 832.8" stroke="#d8d8d8" stroke-width="0.8"/>
<rect x="1209.2" y="826.6" width="10.2" height="9.4" fill="none" stroke="#cfcfcf" stroke-width="1"/>
<rect x="1211.8" y="828.2" width="5" height="6.2" fill="none" stroke="#cfcfcf" stroke-width="0.8"/>
<path d="M1237.4 826.6 L1248 826.6 L1248 836 L1237.4 836 Z M1240.6 826.6 L1240.6 831.6 L1244.8 831.6 L1244.8 826.6" fill="none" stroke="#cfcfcf" stroke-width="1"/>
<rect x="1260.60" y="830.80" width="5.00" height="0.90" fill="#9a9a9a"/>
<rect x="1270.80" y="830.60" width="70.20" height="1.30" fill="#8a8a8a"/>
<rect x="1306.4" y="826.6" width="3.6" height="8.8" rx="0.8" fill="#cfcfcf"/>
<path d="M1348.4 827.8 L1348.4 834.2 M1345.2 831 L1351.6 831" stroke="#9a9a9a" stroke-width="0.9"/>
<text x="1360.50" y="834.60" font-size="9.2" fill="#ececec" textLength="18.50" lengthAdjust="spacingAndGlyphs">117%</text>
</svg></body></html>
